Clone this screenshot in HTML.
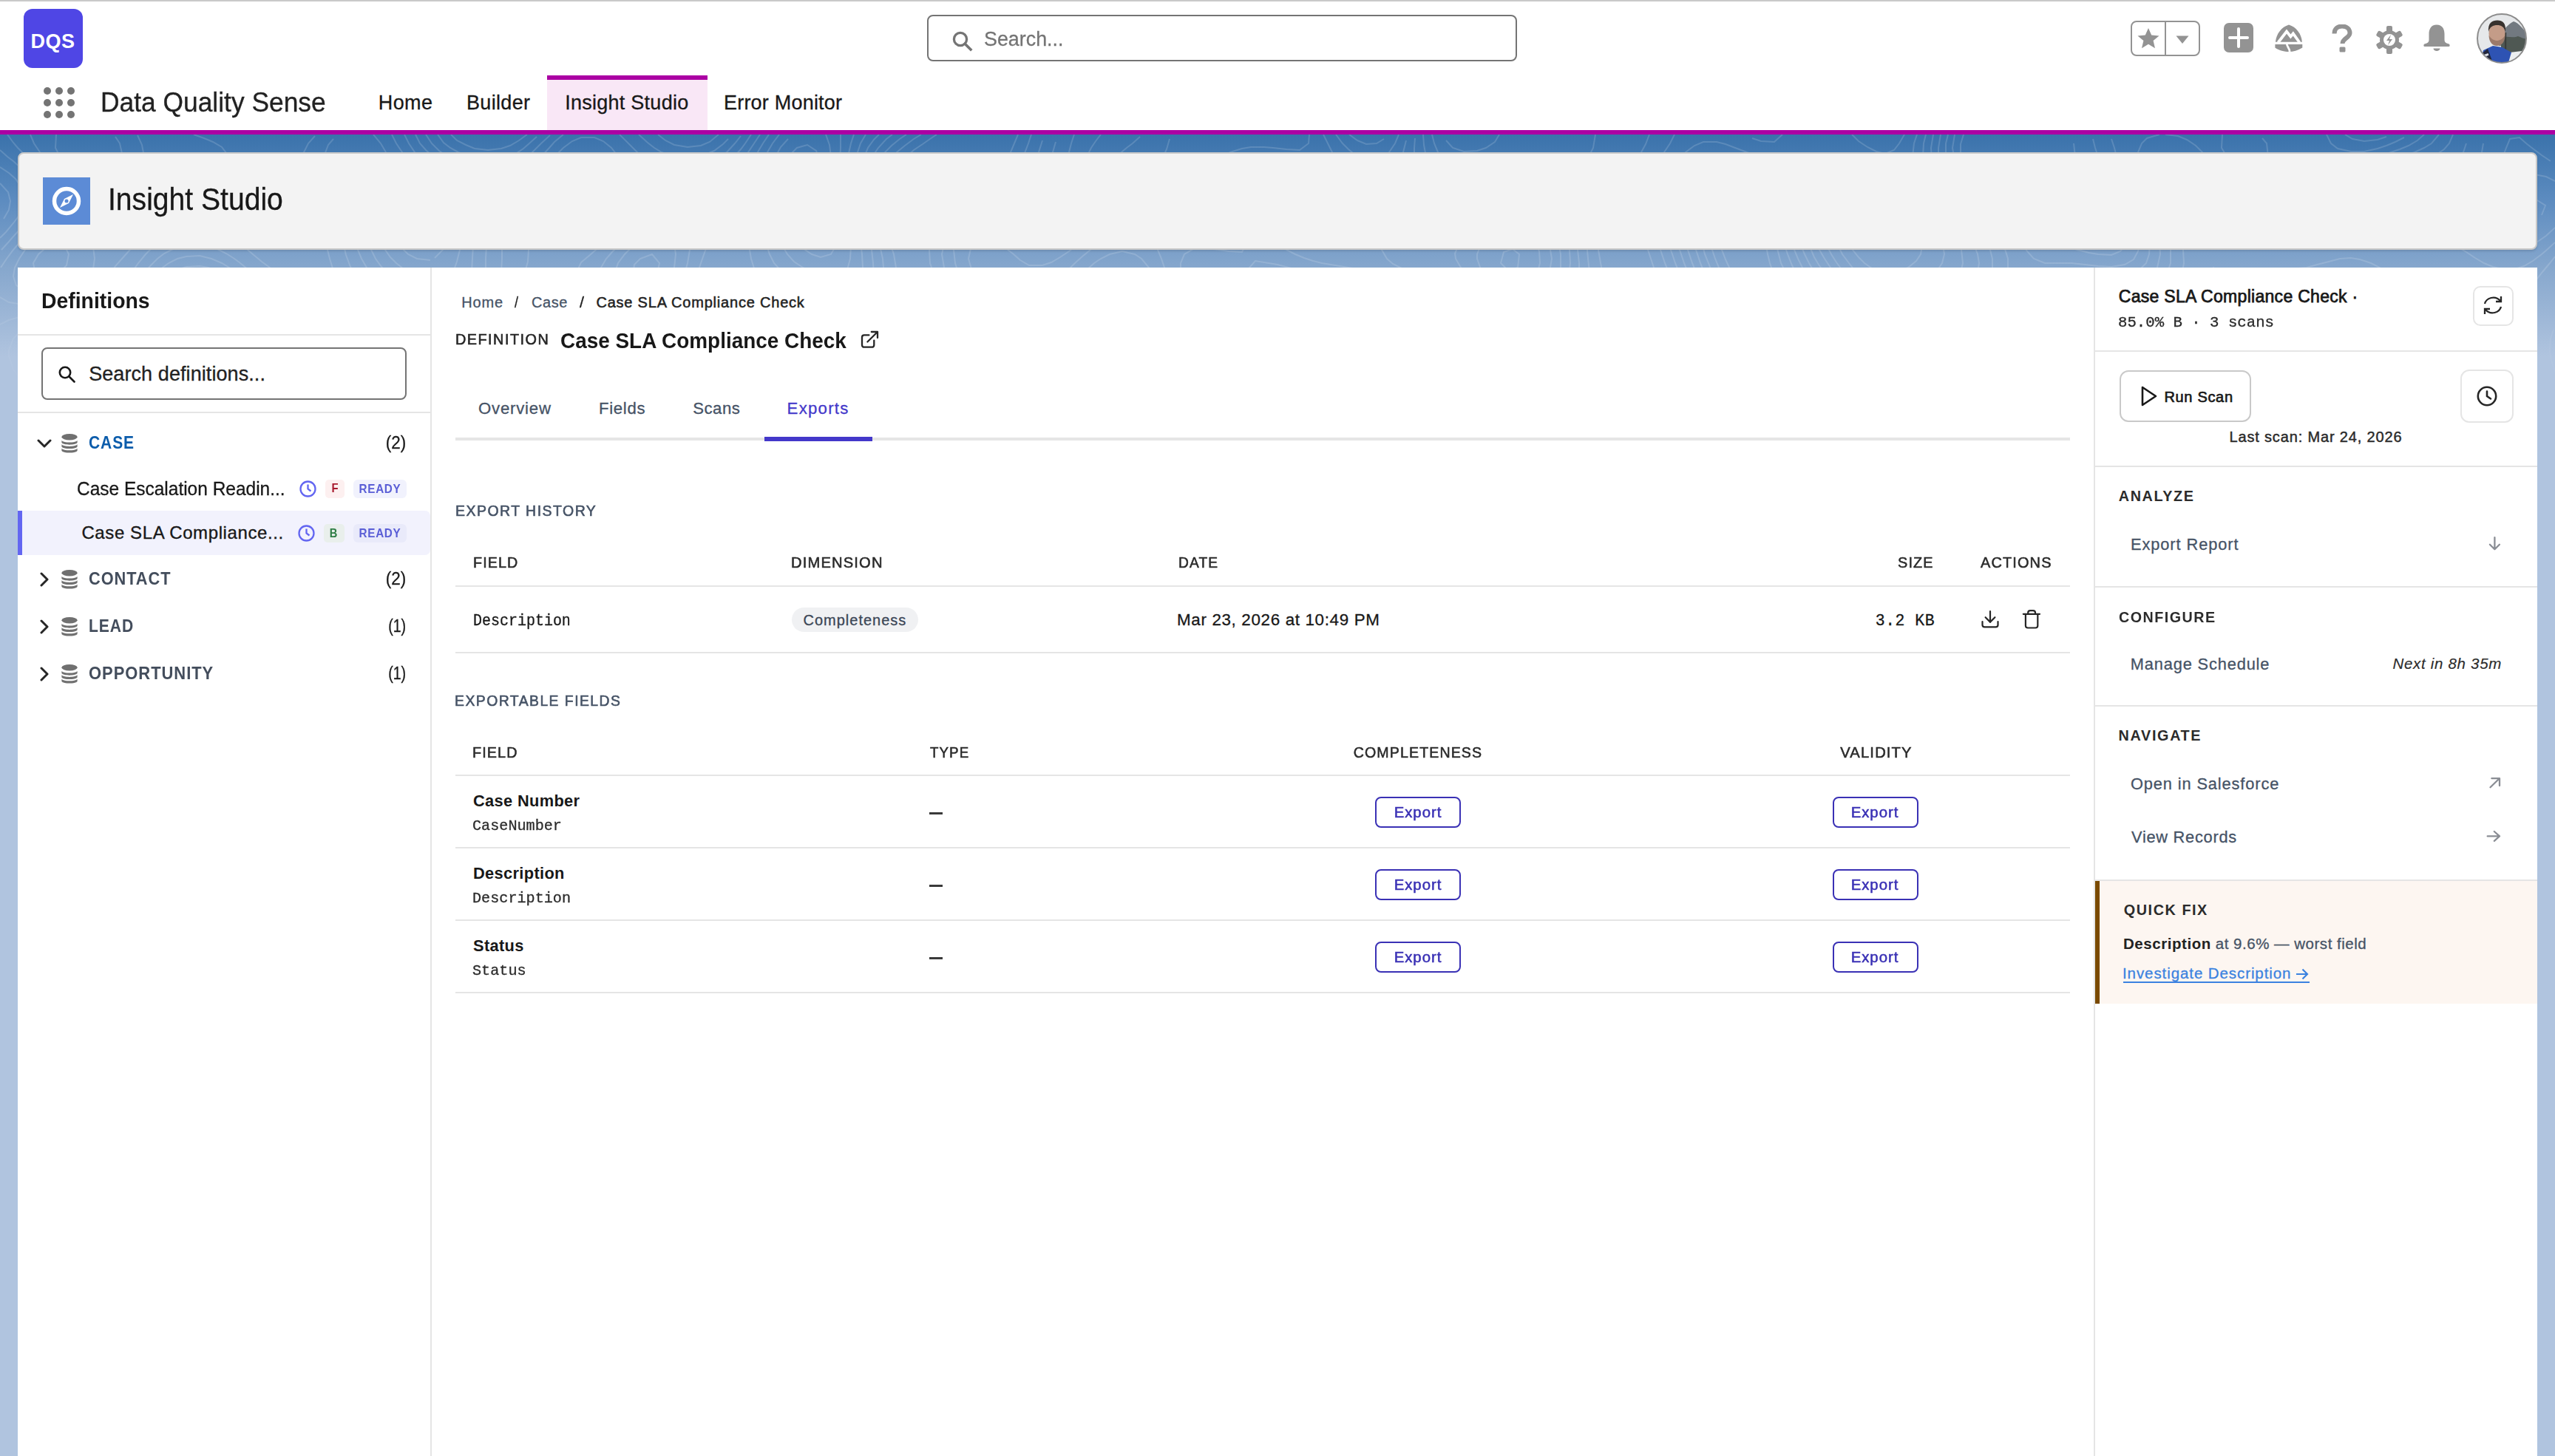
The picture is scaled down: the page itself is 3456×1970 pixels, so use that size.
<!DOCTYPE html>
<html><head><meta charset="utf-8"><style>
html,body{margin:0;padding:0;}
body{width:3456px;height:1970px;position:relative;overflow:hidden;background:#b0c4df;font-family:'Liberation Sans', sans-serif;}
.t{position:absolute;white-space:nowrap;}
.r{position:absolute;box-sizing:border-box;}
</style></head><body>
<div class="r" style="left:0px;top:182px;width:3456px;height:378px;background:linear-gradient(to bottom,#3a72ab 0px,#5d8cc0 90px,#86a7cd 180px,#b0c4df 300px);"></div>
<svg class="r" style="left:0px;top:182px;-webkit-mask-image:linear-gradient(to bottom,#000 0,#000 180px,rgba(0,0,0,.5) 260px,transparent 360px);" width="3456" height="420" viewBox="0 0 3456 420"><path d="M610 0 L618 8 L630 14 L642 19 L660 21 L678 19 L690 15 L702 8 L713 0 M1267 0 L1258 6 L1248 13 L1236 21 L1226 30 L1218 40 L1212 53 L1211 66 L1214 78 L1224 89 L1236 93 L1248 90 L1261 84 L1273 78 L1286 72 L1301 66 L1314 61 L1326 57 L1338 52 L1350 45 L1359 36 L1367 24 L1372 12 L1377 0 M2656 0 L2652 13 L2652 26 L2658 42 L2664 50 L2676 59 L2688 65 L2700 67 L2718 67 L2730 65 L2747 60 L2760 57 L2778 54 L2790 53 L2802 48 L2807 30 L2805 12 M2412 270 L2419 264 L2425 252 L2424 239 L2418 223 L2412 213 L2406 203 L2400 192 L2394 174 L2391 162 L2388 144 L2384 132 L2378 120 L2370 111 L2358 104 L2340 103 L2328 114 L2325 126 L2326 144 L2329 156 L2334 169 L2340 182 L2346 193 L2352 205 L2358 217 L2364 230 L2370 242 L2376 252 L2388 264 L2399 270 L2412 270 M313 330 L326 324 L336 317 L345 306 L346 288 L343 270 L340 258 L336 246 L330 234 L321 222 L312 212 L302 204 L292 198 L276 192 L264 191 L252 193 L240 199 L229 210 L224 222 L223 240 L228 258 L233 270 L239 282 L244 294 L251 306 L258 318 L264 324 L276 332 L294 335 L312 330 M720 420 L732 409 L740 402 L750 393 L759 384 L768 376 L780 366 L790 360 L804 355 L816 352 L834 349 L846 342 L850 330 L846 315 L838 306 L828 300 L810 297 L792 299 L780 303 L768 306 L750 310 L735 312 L720 314 L703 318 L690 321 L677 324 L660 328 L645 330 L630 332 L612 335 L600 341 L594 349 L592 366 L594 381 L597 396 L600 408 M3227 414 L3237 408 L3246 396 L3248 384 L3246 369 L3240 356 L3234 348 L3222 336 L3212 330 L3198 328 L3186 335 L3180 347 L3177 360 L3176 378 L3178 396 L3183 408 L3192 416 L3210 419 L3227 414 M1379 420 L1383 408 L1387 396 L1392 381 L1395 366 L1394 348 L1387 336 L1374 331 L1362 338 L1354 348 L1348 360 L1340 372 L1332 381 L1322 390 L1314 396 L1302 404 L1290 412 L1278 419 M949 420 L960 409 L961 396 L954 389 L940 384 L927 384 L912 389 L906 402 L912 414 M2800 420 L2793 408 L2784 400 L2772 395 L2754 391 L2742 389 L2724 387 L2706 387 L2693 390 L2680 396 L2670 404 L2662 414 M592 0 L600 11 L609 18 L620 24 L636 30 L648 33 L666 34 L684 32 L696 27 L708 19 L716 12 L726 3 M890 0 L900 8 L912 14 L930 17 L948 15 L960 10 L972 0 M1246 0 L1236 6 L1224 15 L1213 24 L1206 33 L1200 43 L1196 60 L1198 78 L1202 90 L1210 102 L1218 110 L1236 114 L1249 108 L1260 101 L1272 94 L1284 87 L1296 81 L1308 77 L1323 72 L1338 68 L1350 64 L1362 59 L1374 48 L1380 39 L1386 25 L1391 12 L1395 0 M2644 0 L2641 18 L2644 36 L2649 48 L2658 59 L2666 66 L2676 72 L2688 78 L2706 83 L2718 84 L2736 85 L2754 86 L2767 90 L2778 97 L2790 108 L2796 115 L2808 126 L2817 132 L2831 138 L2844 139 L2856 132 L2861 120 L2861 102 L2857 84 L2854 72 L2849 60 L2844 46 L2838 30 L2834 18 L2831 6 M3172 0 L3182 6 L3198 9 L3216 7 L3228 3 M2421 288 L2430 281 L2437 270 L2441 252 L2440 234 L2435 222 L2429 210 L2421 198 L2415 186 L2409 174 L2406 162 L2401 144 L2398 132 L2393 120 L2386 108 L2376 98 L2364 90 L2352 86 L2334 87 L2322 93 L2315 102 L2310 120 L2311 138 L2316 156 L2320 168 L2325 180 L2330 192 L2336 204 L2341 216 L2347 228 L2353 240 L2360 252 L2368 264 L2376 273 L2386 282 L2397 288 L2412 291 M2053 180 L2055 162 L2046 155 L2034 159 L2030 174 L2040 184 L2053 180 M425 360 L438 355 L449 348 L456 342 L466 330 L469 318 L465 306 L456 298 L444 292 L426 288 L414 288 L396 286 L381 282 L372 275 L363 264 L356 252 L349 240 L342 228 L336 220 L327 210 L318 201 L306 192 L296 186 L282 180 L270 178 L252 179 L240 183 L228 190 L220 198 L213 210 L210 222 L210 235 L214 252 L219 264 L224 276 L229 288 L235 300 L240 313 L246 326 L252 336 L264 348 L276 354 L288 356 L306 355 L318 353 L336 351 L354 352 L366 356 L380 360 L396 363 L414 363 M977 420 L984 408 L987 396 L984 380 L978 372 L966 366 L948 362 L934 360 L918 358 L905 354 L894 347 L885 336 L879 324 L873 312 L864 300 L857 294 L846 287 L834 282 L816 278 L798 277 L780 280 L768 283 L754 288 L738 293 L726 297 L714 301 L700 306 L684 311 L672 314 L654 317 L642 319 L624 319 L606 319 L588 320 L574 324 L567 336 L569 354 L573 366 L576 378 L581 396 L584 408 L589 420 M3245 420 L3252 414 L3260 402 L3262 384 L3258 366 L3253 354 L3246 343 L3240 335 L3229 324 L3222 317 L3210 309 L3198 303 L3180 302 L3169 312 L3165 324 L3163 342 L3162 354 L3161 372 L3161 390 L3162 402 L3168 420 M1397 420 L1402 408 L1406 396 L1410 382 L1413 366 L1412 348 L1408 336 L1402 324 L1392 313 L1380 308 L1362 310 L1352 318 L1344 329 L1338 341 L1332 353 L1326 363 L1320 372 L1308 384 L1301 390 L1290 398 L1278 406 L1266 413 L1255 420 M1848 372 L1848 358 L1836 351 L1829 360 L1835 372 L1848 372 M2827 420 L2822 408 L2815 396 L2808 387 L2797 378 L2785 372 L2772 369 L2754 368 L2736 367 L2718 367 L2700 368 L2688 372 L2676 380 L2665 390 L2658 399 L2652 409 M736 420 L744 413 L756 403 L765 396 L774 390 L786 383 L803 378 L816 377 L831 378 L846 383 L858 390 L865 396 L875 408 L882 417 M576 0 L584 12 L594 22 L606 30 L618 35 L630 39 L642 43 L660 46 L678 46 L696 42 L706 36 L714 30 L726 18 L732 12 L744 1 M864 0 L876 11 L885 18 L895 24 L912 30 L924 31 L942 31 L954 27 L966 22 L978 13 L985 6 M1226 0 L1217 6 L1206 15 L1197 24 L1190 36 L1186 48 L1184 66 L1187 84 L1191 96 L1197 108 L1205 120 L1212 128 L1224 138 L1236 139 L1246 132 L1254 125 L1265 114 L1273 108 L1284 100 L1296 93 L1308 89 L1325 84 L1338 82 L1356 80 L1373 78 L1386 72 L1392 65 L1398 50 L1402 36 L1405 24 L1410 8 M2635 0 L2632 12 L2632 30 L2635 42 L2642 54 L2652 66 L2658 72 L2670 81 L2682 88 L2694 94 L2706 98 L2718 103 L2732 108 L2743 114 L2754 122 L2766 132 L2773 138 L2784 145 L2796 151 L2810 156 L2826 160 L2838 162 L2856 163 L2868 158 L2875 150 L2880 133 L2880 120 L2879 108 L2877 90 L2874 74 L2871 60 L2868 48 L2863 30 L2860 18 L2856 6 M3006 0 L3005 18 L3012 30 L3018 36 L3030 43 L3048 44 L3060 38 L3068 30 L3066 12 L3060 5 M3147 0 L3153 12 L3162 19 L3180 23 L3198 23 L3216 19 L3228 15 L3240 10 L3252 4 M2422 306 L2433 300 L2442 290 L2448 278 L2453 264 L2454 252 L2454 240 L2449 222 L2443 210 L2436 198 L2430 188 L2424 177 L2418 162 L2414 150 L2411 138 L2406 122 L2400 109 L2394 99 L2385 90 L2376 83 L2364 77 L2346 72 L2334 72 L2322 75 L2310 83 L2304 91 L2298 108 L2298 120 L2299 132 L2303 150 L2306 162 L2311 174 L2316 187 L2322 201 L2328 214 L2334 227 L2340 239 L2346 250 L2352 260 L2358 270 L2368 282 L2376 289 L2388 298 L2400 304 L2412 307 M2057 216 L2065 210 L2074 198 L2080 186 L2083 174 L2082 158 L2076 144 L2070 137 L2058 130 L2040 128 L2022 132 L2013 138 L2004 147 L1998 162 L1998 168 L2004 185 L2010 195 L2018 204 L2028 213 L2040 219 L2057 216 M994 420 L1000 408 L1005 396 L1007 378 L1002 363 L993 354 L981 348 L966 344 L951 342 L936 339 L924 336 L912 329 L902 318 L894 308 L888 300 L876 289 L866 282 L854 276 L840 270 L828 266 L816 263 L798 261 L780 261 L766 264 L750 269 L738 274 L726 280 L714 286 L702 292 L690 297 L678 301 L660 306 L648 308 L630 308 L612 307 L600 305 L582 303 L564 301 L546 301 L528 302 L513 300 L499 294 L488 288 L477 282 L463 276 L450 271 L438 269 L420 266 L407 264 L390 258 L381 252 L372 243 L364 234 L355 222 L348 214 L339 204 L330 196 L318 186 L310 180 L300 174 L286 168 L270 164 L252 165 L240 168 L228 174 L216 183 L208 192 L201 204 L198 216 L198 233 L201 246 L206 258 L211 270 L217 282 L222 295 L228 311 L233 324 L238 336 L244 348 L252 358 L262 366 L276 371 L288 373 L306 373 L324 373 L342 374 L360 378 L372 380 L390 383 L408 382 L422 378 L438 372 L450 366 L461 360 L470 354 L480 347 L492 339 L504 332 L522 331 L534 339 L542 348 L551 360 L557 372 L562 384 L566 396 L570 409 M2851 420 L2846 408 L2839 396 L2832 386 L2826 378 L2814 366 L2805 360 L2795 354 L2779 348 L2766 345 L2751 342 L2736 339 L2724 335 L2712 327 L2710 312 L2713 300 L2714 282 L2706 276 L2694 279 L2682 288 L2676 300 L2676 309 L2680 324 L2677 342 L2671 354 L2664 366 L2658 376 L2652 387 L2646 398 L2640 411 M3265 420 L3273 408 L3276 390 L3272 372 L3268 360 L3261 348 L3253 336 L3246 326 L3239 318 L3228 306 L3222 300 L3210 290 L3199 282 L3188 276 L3174 273 L3157 276 L3150 282 L3144 300 L3144 308 L3145 324 L3147 342 L3147 360 L3147 378 L3146 396 L3145 414 M1415 420 L1419 408 L1422 396 L1426 378 L1427 360 L1424 342 L1420 330 L1414 318 L1405 306 L1398 299 L1386 292 L1368 289 L1354 294 L1344 301 L1335 312 L1329 324 L1324 336 L1319 348 L1312 360 L1303 372 L1296 379 L1284 389 L1274 396 L1265 402 L1254 409 L1242 416 M1849 402 L1861 396 L1867 384 L1869 366 L1866 353 L1860 341 L1848 331 L1836 327 L1824 330 L1812 341 L1809 354 L1812 370 L1818 382 L1824 390 L1836 399 L1848 402 M752 420 L762 412 L774 405 L786 399 L798 396 L816 396 L828 399 L840 405 L852 414 L858 420 M562 0 L568 12 L576 21 L586 30 L596 36 L609 42 L624 47 L636 51 L648 55 L666 59 L682 60 L690 60 L707 54 L715 48 L726 37 L732 30 L743 18 L750 10 L762 0 M838 0 L846 8 L856 18 L864 26 L876 34 L888 39 L900 42 L918 45 L936 45 L950 42 L966 36 L975 30 L984 23 L994 12 L1002 2 M1207 0 L1199 6 L1188 18 L1182 27 L1176 42 L1174 54 L1175 72 L1177 84 L1182 101 L1188 114 L1193 126 L1200 138 L1205 150 L1209 162 L1212 180 L1212 198 L1213 210 L1217 228 L1222 240 L1230 250 L1240 258 L1254 263 L1269 258 L1276 246 L1276 228 L1272 213 L1267 198 L1262 186 L1258 174 L1257 156 L1261 144 L1267 132 L1278 120 L1284 114 L1296 106 L1308 101 L1326 96 L1338 95 L1352 96 L1368 99 L1380 102 L1398 105 L1410 100 L1417 90 L1420 72 L1420 54 L1422 36 L1424 24 L1428 10 M2625 0 L2622 18 L2622 25 L2625 42 L2631 54 L2640 66 L2646 73 L2658 84 L2666 90 L2676 97 L2688 105 L2700 113 L2711 120 L2718 126 L2729 138 L2736 149 L2742 158 L2751 168 L2766 174 L2778 174 L2790 174 L2802 174 L2820 176 L2838 178 L2856 179 L2874 176 L2886 169 L2892 158 L2895 144 L2895 126 L2893 108 L2892 96 L2890 78 L2889 60 L2889 42 L2892 24 L2897 12 L2904 5 L2921 0 M2929 0 L2946 2 L2958 7 L2970 15 L2979 24 L2988 33 L2997 42 L3006 50 L3018 57 L3030 62 L3048 64 L3066 60 L3078 55 L3090 48 L3101 42 L3114 36 L3126 35 L3138 37 L3156 40 L3174 40 L3192 37 L3204 34 L3217 30 L3234 24 L3246 20 L3258 15 L3270 8 L3279 0 M2437 318 L2448 306 L2454 295 L2459 282 L2463 270 L2466 253 L2466 240 L2464 228 L2459 216 L2453 204 L2445 192 L2438 180 L2432 168 L2427 156 L2423 144 L2418 126 L2415 114 L2409 102 L2401 90 L2394 83 L2382 74 L2370 67 L2358 62 L2346 60 L2328 59 L2316 62 L2304 69 L2295 78 L2289 90 L2286 102 L2286 120 L2287 132 L2292 150 L2296 162 L2300 174 L2305 186 L2310 198 L2316 212 L2322 225 L2328 237 L2334 249 L2340 260 L2346 270 L2355 282 L2364 292 L2372 300 L2382 308 L2394 315 L2406 320 L2424 323 L2437 318 M2058 240 L2070 232 L2079 222 L2087 210 L2093 198 L2096 186 L2099 168 L2096 150 L2091 138 L2082 126 L2073 120 L2059 114 L2046 112 L2028 113 L2016 116 L2004 122 L1992 130 L1982 138 L1974 147 L1968 161 L1969 168 L1976 180 L1986 192 L1992 200 L2001 210 L2010 220 L2018 228 L2028 236 L2040 242 L2058 240 M1007 420 L1014 408 L1020 396 L1024 384 L1027 372 L1026 354 L1021 342 L1014 335 L1002 328 L987 324 L972 321 L954 318 L942 315 L930 309 L918 300 L911 294 L900 285 L888 278 L876 272 L864 267 L852 263 L839 258 L822 252 L810 249 L796 246 L780 244 L762 245 L750 248 L738 253 L726 260 L714 268 L703 276 L693 282 L682 288 L666 294 L654 297 L636 298 L618 297 L601 294 L588 291 L576 288 L558 283 L546 281 L528 277 L516 274 L504 270 L487 264 L474 259 L462 254 L450 250 L436 246 L420 242 L408 239 L396 234 L384 226 L372 216 L366 210 L354 199 L346 192 L336 183 L325 174 L317 168 L306 161 L294 155 L276 150 L264 149 L250 150 L234 155 L222 161 L213 168 L204 177 L196 186 L189 198 L186 210 L185 228 L188 240 L193 252 L198 264 L204 276 L210 289 L216 304 L221 318 L224 330 L228 342 L234 356 L240 366 L252 378 L263 384 L276 388 L293 390 L306 391 L324 392 L342 395 L354 398 L372 402 L384 403 L396 401 L414 396 L426 392 L438 386 L450 381 L462 375 L474 369 L486 364 L498 360 L516 359 L528 365 L537 372 L545 384 L551 396 L555 408 L560 420 M3094 420 L3081 414 L3069 408 L3056 402 L3042 397 L3030 395 L3012 394 L2994 395 L2982 396 L2964 398 L2946 399 L2928 402 L2916 405 L2901 408 L2892 408 L2878 402 L2868 396 L2856 386 L2848 378 L2838 368 L2829 360 L2820 352 L2808 343 L2796 336 L2786 330 L2776 324 L2766 316 L2758 306 L2753 294 L2749 276 L2747 264 L2743 246 L2736 234 L2724 230 L2712 234 L2700 241 L2688 249 L2676 257 L2666 264 L2658 270 L2646 282 L2640 294 L2639 306 L2641 318 L2646 336 L2647 348 L2646 364 L2642 378 L2638 390 L2633 402 L2628 416 M3283 420 L3288 407 L3288 390 L3286 378 L3281 366 L3276 354 L3269 342 L3260 330 L3252 319 L3246 311 L3237 300 L3228 290 L3221 282 L3210 270 L3203 264 L3192 256 L3180 251 L3162 249 L3144 252 L3132 257 L3124 264 L3118 276 L3118 294 L3121 306 L3126 322 L3130 336 L3132 353 L3132 366 L3131 378 L3127 396 L3122 408 L3114 419 M1433 420 L1436 408 L1440 391 L1441 378 L1440 360 L1438 348 L1434 335 L1428 321 L1422 310 L1415 300 L1404 288 L1397 282 L1386 276 L1368 272 L1350 275 L1338 281 L1329 288 L1320 300 L1315 312 L1311 324 L1308 336 L1302 350 L1296 360 L1286 372 L1278 380 L1266 389 L1256 396 L1246 402 L1236 408 L1224 415 M1857 420 L1867 414 L1875 402 L1879 390 L1881 372 L1878 354 L1874 342 L1867 330 L1860 322 L1848 315 L1830 314 L1816 318 L1806 325 L1799 336 L1796 354 L1800 372 L1805 384 L1812 394 L1818 402 L1830 413 L1842 419 M772 420 L786 414 L798 412 L816 414 L828 419 M76 0 L75 18 L81 30 L88 42 L96 52 L105 60 L114 66 L132 68 L144 63 L155 54 L162 44 L166 30 L162 12 L156 3 M547 0 L553 12 L561 24 L570 32 L582 40 L594 46 L606 51 L618 55 L632 60 L648 66 L660 70 L672 73 L690 77 L702 78 L714 76 L726 68 L732 60 L739 48 L746 36 L756 24 L762 18 L774 9 L786 4 L804 4 L816 9 L827 18 L834 27 L840 37 L846 50 L858 59 L876 59 L894 59 L912 60 L930 59 L948 57 L960 54 L972 48 L984 39 L993 30 L1002 20 L1008 12 L1016 0 M1189 0 L1182 7 L1174 18 L1169 30 L1165 48 L1165 66 L1167 84 L1170 96 L1176 113 L1181 126 L1186 138 L1190 150 L1194 168 L1195 180 L1196 198 L1198 216 L1200 228 L1206 244 L1212 255 L1219 264 L1230 275 L1240 282 L1252 288 L1266 293 L1278 298 L1286 306 L1290 321 L1290 330 L1285 348 L1279 360 L1272 368 L1261 378 L1254 384 L1242 392 L1230 400 L1218 407 L1206 414 L1197 420 M1455 420 L1459 408 L1461 390 L1459 372 L1456 360 L1451 348 L1446 335 L1440 322 L1434 311 L1427 300 L1419 288 L1410 277 L1403 270 L1392 262 L1380 256 L1362 254 L1344 255 L1326 257 L1313 252 L1303 240 L1298 228 L1292 216 L1287 204 L1282 192 L1277 180 L1274 162 L1278 144 L1284 132 L1290 125 L1302 116 L1314 111 L1332 108 L1350 111 L1362 115 L1374 120 L1388 126 L1404 130 L1422 127 L1432 120 L1440 108 L1443 96 L1444 78 L1443 60 L1443 42 L1446 24 L1449 12 L1453 0 M1825 0 L1836 8 L1848 13 L1862 12 L1872 6 M2615 0 L2612 18 L2613 36 L2617 48 L2624 60 L2633 72 L2640 80 L2650 90 L2658 97 L2670 107 L2679 114 L2688 122 L2698 132 L2706 143 L2712 155 L2716 168 L2716 186 L2712 199 L2705 210 L2694 222 L2687 228 L2676 237 L2664 245 L2653 252 L2644 258 L2634 266 L2625 276 L2620 288 L2619 306 L2622 320 L2627 336 L2630 348 L2631 366 L2628 384 L2625 396 L2621 408 M3301 420 L3303 402 L3300 385 L3296 372 L3290 360 L3283 348 L3276 337 L3270 328 L3263 318 L3253 306 L3246 296 L3240 288 L3231 276 L3222 264 L3216 257 L3205 246 L3198 240 L3186 234 L3168 230 L3150 230 L3132 234 L3120 238 L3108 244 L3100 252 L3095 264 L3094 282 L3096 295 L3101 312 L3106 324 L3110 336 L3113 354 L3111 372 L3104 384 L3090 389 L3072 386 L3060 383 L3042 379 L3030 377 L3012 376 L2994 376 L2976 377 L2958 377 L2940 377 L2924 378 L2910 379 L2892 379 L2880 377 L2868 372 L2856 365 L2844 355 L2835 348 L2826 341 L2814 332 L2804 324 L2796 318 L2784 307 L2778 299 L2772 288 L2767 270 L2765 258 L2764 240 L2766 222 L2771 210 L2778 202 L2790 195 L2802 192 L2820 191 L2838 192 L2850 192 L2868 192 L2880 190 L2892 185 L2903 174 L2907 162 L2908 144 L2907 126 L2905 108 L2904 90 L2905 72 L2908 54 L2915 42 L2922 36 L2940 31 L2958 34 L2970 40 L2981 48 L2989 54 L3000 62 L3012 70 L3024 75 L3036 78 L3054 79 L3066 77 L3082 72 L3096 67 L3108 64 L3126 61 L3144 60 L3156 59 L3174 56 L3186 52 L3198 48 L3215 42 L3228 37 L3240 33 L3252 29 L3266 24 L3279 18 L3289 12 L3299 0 M2434 342 L2446 336 L2454 325 L2460 313 L2465 300 L2469 288 L2473 276 L2477 258 L2478 246 L2477 234 L2472 216 L2466 205 L2460 195 L2454 186 L2447 174 L2441 162 L2436 150 L2431 132 L2428 120 L2424 107 L2418 94 L2412 84 L2400 72 L2391 66 L2381 60 L2368 54 L2352 49 L2340 46 L2322 46 L2310 49 L2298 55 L2286 65 L2280 74 L2274 89 L2272 102 L2274 120 L2276 132 L2280 147 L2285 162 L2289 174 L2294 186 L2299 198 L2305 210 L2310 222 L2316 234 L2322 246 L2328 258 L2335 270 L2342 282 L2351 294 L2358 301 L2369 312 L2377 318 L2388 325 L2400 333 L2412 338 L2424 342 M801 132 L812 126 L822 118 L831 108 L837 96 L835 78 L822 77 L810 81 L798 86 L786 92 L774 100 L768 109 L768 122 L777 132 L792 134 M2046 264 L2064 259 L2074 252 L2082 244 L2090 234 L2097 222 L2103 210 L2108 198 L2111 180 L2111 162 L2108 144 L2103 132 L2095 120 L2088 114 L2076 107 L2063 102 L2046 99 L2028 99 L2014 102 L1998 108 L1986 114 L1974 120 L1962 125 L1950 129 L1932 132 L1920 132 L1902 133 L1884 137 L1874 144 L1869 156 L1876 168 L1884 175 L1896 181 L1912 186 L1926 188 L1944 190 L1956 194 L1968 200 L1980 210 L1987 216 L1998 228 L2004 235 L2014 246 L2022 253 L2034 261 L2046 264 M1020 420 L1026 410 L1032 399 L1038 388 L1044 376 L1050 363 L1056 348 L1059 336 L1063 324 L1068 308 L1073 294 L1077 282 L1077 264 L1068 252 L1056 250 L1044 254 L1032 263 L1024 270 L1014 276 L996 276 L987 270 L982 258 L981 240 L978 224 L966 220 L960 228 L953 240 L944 252 L936 258 L918 264 L907 264 L894 263 L876 259 L864 256 L852 252 L836 246 L822 241 L810 236 L798 231 L786 227 L768 223 L756 222 L744 223 L730 228 L720 236 L711 246 L702 256 L694 264 L684 272 L672 280 L660 284 L642 288 L630 288 L618 287 L600 283 L588 280 L576 276 L560 270 L546 265 L534 261 L522 257 L507 252 L492 246 L480 241 L468 234 L457 228 L446 222 L436 216 L426 210 L413 204 L398 198 L385 192 L374 186 L365 180 L354 172 L342 162 L335 156 L324 147 L312 139 L300 134 L288 131 L270 129 L252 130 L240 133 L228 138 L216 145 L204 155 L197 162 L187 174 L180 184 L174 195 L171 210 L173 228 L177 240 L182 252 L188 264 L195 276 L200 288 L205 300 L210 314 L214 330 L217 342 L222 358 L228 372 L234 382 L242 390 L252 397 L264 402 L282 407 L294 409 L312 412 L324 415 L336 420 M67 192 L81 186 L90 177 L93 162 L87 150 L72 149 L60 155 L52 162 L45 174 L48 189 L60 193 M1881 420 L1886 408 L1890 390 L1890 378 L1890 366 L1887 348 L1883 336 L1877 324 L1867 312 L1858 306 L1842 301 L1824 302 L1812 307 L1800 314 L1791 324 L1786 336 L1785 354 L1788 369 L1794 384 L1800 396 L1806 405 L1813 414 M403 420 L414 414 L426 407 L438 401 L450 395 L462 389 L475 384 L492 379 L510 379 L522 384 L533 396 L540 408 L545 420 M145 420 L132 414 L120 412 L102 412 L90 415 M41 0 L46 12 L54 24 L60 32 L67 42 L75 54 L82 66 L87 78 L90 90 L89 102 L80 114 L72 121 L60 131 L52 138 L42 148 L34 156 L26 168 L20 180 L18 192 L22 204 L31 210 L48 213 L66 212 L78 210 L95 204 L108 198 L118 192 L126 182 L128 168 L126 152 L124 138 L124 120 L130 108 L138 102 L150 95 L162 88 L174 80 L182 72 L189 60 L193 48 L195 30 L192 14 L186 1 M262 0 L276 5 L288 10 L300 17 L306 25 L308 42 L305 54 L300 66 L291 78 L282 86 L270 92 L258 96 L240 101 L228 106 L216 113 L208 120 L198 130 L191 138 L181 150 L174 158 L165 168 L156 178 L150 188 L149 204 L153 216 L158 228 L164 240 L171 252 L178 264 L185 276 L191 288 L196 300 L200 312 L204 327 L207 342 L210 360 L212 372 L216 388 L222 400 L229 408 L240 416 M530 0 L536 12 L544 24 L552 33 L564 41 L576 48 L588 53 L600 58 L612 62 L624 67 L637 72 L650 78 L662 84 L673 90 L684 97 L696 107 L702 114 L709 126 L714 144 L715 156 L714 172 L710 186 L706 198 L702 211 L696 228 L691 240 L684 252 L678 259 L666 269 L654 274 L642 277 L624 277 L612 275 L594 270 L582 266 L570 261 L558 256 L546 251 L534 246 L520 240 L507 234 L496 228 L486 222 L474 213 L465 204 L456 192 L450 181 L446 168 L443 156 L442 138 L442 120 L439 102 L435 90 L428 78 L421 66 L414 54 L410 42 L411 24 L417 12 L426 2 M1032 420 L1040 408 L1049 396 L1056 386 L1062 378 L1072 366 L1080 355 L1086 346 L1092 334 L1098 318 L1102 306 L1105 294 L1108 276 L1107 258 L1104 245 L1097 234 L1086 225 L1074 218 L1062 214 L1050 210 L1037 204 L1026 194 L1020 181 L1016 168 L1014 156 L1008 138 L1002 129 L990 121 L972 126 L966 132 L959 144 L954 157 L948 174 L944 186 L940 198 L935 210 L929 222 L920 234 L912 240 L899 246 L882 247 L870 246 L852 241 L840 236 L828 231 L816 224 L804 216 L796 210 L786 200 L780 186 L786 173 L798 163 L806 156 L816 149 L828 139 L836 132 L846 122 L854 114 L864 102 L870 96 L882 86 L894 81 L908 78 L924 77 L942 77 L960 75 L972 70 L984 60 L990 53 L999 42 L1008 30 L1014 21 L1020 12 L1028 0 M1171 0 L1164 12 L1160 24 L1157 36 L1155 54 L1156 72 L1158 85 L1162 102 L1166 114 L1170 126 L1176 144 L1179 156 L1181 174 L1182 192 L1182 207 L1183 222 L1188 240 L1193 252 L1200 264 L1206 272 L1214 282 L1224 291 L1235 300 L1243 306 L1254 315 L1262 324 L1266 342 L1260 358 L1254 366 L1242 377 L1233 384 L1224 390 L1212 397 L1200 404 L1188 411 L1177 420 M1495 420 L1506 410 L1513 402 L1515 384 L1506 377 L1494 372 L1482 363 L1474 354 L1465 342 L1458 331 L1452 321 L1446 311 L1439 300 L1432 288 L1424 276 L1416 266 L1410 258 L1398 247 L1388 240 L1374 235 L1362 233 L1344 232 L1329 228 L1320 222 L1309 210 L1302 199 L1296 187 L1292 174 L1290 156 L1296 141 L1304 132 L1314 126 L1332 123 L1349 126 L1362 132 L1372 138 L1383 144 L1397 150 L1410 152 L1422 150 L1434 144 L1446 135 L1454 126 L1461 114 L1465 102 L1467 84 L1466 66 L1466 48 L1470 30 L1476 18 L1482 9 L1489 0 M1807 0 L1816 12 L1824 20 L1836 30 L1848 36 L1860 37 L1872 32 L1879 24 L1887 12 L1892 0 M2605 0 L2602 12 L2601 30 L2604 44 L2610 57 L2616 66 L2626 78 L2634 87 L2642 96 L2652 105 L2661 114 L2670 123 L2678 132 L2686 144 L2692 156 L2695 168 L2695 186 L2690 198 L2682 210 L2676 217 L2664 227 L2654 234 L2644 240 L2634 246 L2622 254 L2611 264 L2604 275 L2601 288 L2602 306 L2605 318 L2610 332 L2615 348 L2618 360 L2618 378 L2616 390 L2611 408 L2607 420 M3319 420 L3318 402 L3315 390 L3311 378 L3306 366 L3299 354 L3292 342 L3283 330 L3276 321 L3269 312 L3261 300 L3252 288 L3246 279 L3240 270 L3233 258 L3225 246 L3216 235 L3209 228 L3198 220 L3186 215 L3168 212 L3150 213 L3132 216 L3120 218 L3106 222 L3093 228 L3084 236 L3078 247 L3075 264 L3075 282 L3078 300 L3080 312 L3083 330 L3082 348 L3072 357 L3054 359 L3036 360 L3024 361 L3006 362 L2988 363 L2970 363 L2952 363 L2934 364 L2916 365 L2898 364 L2880 361 L2868 356 L2856 349 L2846 342 L2838 336 L2826 327 L2815 318 L2808 312 L2797 300 L2790 291 L2784 278 L2780 264 L2780 246 L2784 228 L2790 218 L2801 210 L2814 205 L2826 204 L2844 204 L2856 204 L2872 204 L2886 202 L2899 198 L2910 191 L2918 180 L2922 162 L2921 144 L2919 126 L2918 108 L2918 90 L2922 72 L2928 62 L2940 54 L2952 53 L2964 56 L2976 62 L2988 70 L3000 77 L3012 84 L3024 89 L3036 92 L3054 93 L3072 90 L3084 87 L3097 84 L3114 81 L3132 79 L3149 78 L3162 76 L3174 72 L3189 66 L3202 60 L3215 54 L3228 49 L3240 45 L3252 41 L3269 36 L3282 32 L3294 28 L3306 20 L3313 12 L3318 0 M786 51 L775 42 L786 33 L796 42 L786 51 M2448 366 L2456 360 L2463 348 L2468 336 L2472 321 L2476 306 L2480 294 L2484 279 L2488 264 L2490 252 L2490 234 L2487 222 L2482 210 L2475 198 L2467 186 L2460 176 L2454 166 L2448 152 L2443 138 L2441 126 L2437 108 L2434 96 L2429 84 L2420 72 L2412 64 L2400 56 L2388 50 L2376 44 L2364 39 L2352 35 L2334 31 L2316 31 L2298 36 L2288 42 L2280 49 L2270 60 L2264 72 L2260 84 L2259 102 L2262 120 L2264 132 L2268 144 L2274 162 L2278 174 L2283 186 L2288 198 L2294 210 L2300 222 L2305 234 L2311 246 L2317 258 L2323 270 L2330 282 L2338 294 L2346 305 L2352 312 L2364 323 L2373 330 L2382 336 L2394 345 L2406 353 L2418 360 L2430 366 L2442 367 M2064 282 L2076 274 L2086 264 L2094 254 L2100 246 L2108 234 L2114 222 L2118 210 L2122 192 L2124 174 L2123 156 L2119 138 L2114 126 L2106 114 L2100 108 L2088 100 L2076 94 L2064 90 L2046 87 L2028 87 L2010 90 L1998 93 L1986 97 L1974 102 L1956 107 L1944 109 L1926 109 L1914 108 L1896 105 L1878 104 L1860 106 L1848 109 L1830 111 L1812 108 L1800 104 L1788 98 L1776 90 L1767 84 L1758 78 L1746 70 L1734 64 L1716 63 L1704 72 L1702 84 L1704 98 L1709 114 L1714 126 L1721 138 L1728 146 L1740 156 L1752 162 L1764 167 L1776 171 L1788 174 L1806 177 L1824 180 L1836 182 L1848 186 L1862 192 L1875 198 L1890 204 L1902 207 L1920 209 L1938 210 L1950 212 L1962 217 L1974 224 L1985 234 L1992 242 L2001 252 L2010 263 L2017 270 L2028 279 L2040 285 L2058 285 M1894 420 L1897 408 L1899 390 L1899 372 L1897 354 L1895 342 L1890 327 L1884 315 L1878 306 L1866 295 L1854 290 L1836 289 L1818 292 L1806 297 L1794 304 L1785 312 L1777 324 L1774 336 L1774 354 L1777 366 L1782 382 L1788 395 L1794 406 L1800 416 M180 420 L168 412 L156 406 L144 402 L126 397 L114 396 L96 396 L84 396 L66 400 L54 403 L42 413 M435 420 L444 414 L456 407 L468 402 L486 397 L504 398 L516 405 L524 414 M10 0 L18 11 L24 18 L36 30 L42 37 L52 48 L59 60 L65 72 L67 84 L65 96 L60 108 L51 120 L42 129 L34 138 L24 149 L18 156 L9 168 L1 180 M505 0 L515 12 L522 24 L528 32 L540 42 L551 48 L564 54 L576 58 L588 63 L600 67 L613 72 L626 78 L638 84 L648 91 L660 101 L667 108 L674 120 L678 134 L679 150 L679 168 L678 186 L678 199 L677 216 L674 234 L668 246 L660 255 L648 262 L636 265 L618 265 L606 263 L592 258 L579 252 L566 246 L554 240 L542 234 L530 228 L519 222 L509 216 L498 208 L487 198 L480 189 L474 179 L468 163 L465 150 L463 132 L463 114 L462 96 L460 84 L456 72 L449 60 L442 48 L438 30 L444 14 L451 6 M1045 420 L1054 408 L1062 400 L1072 390 L1080 383 L1092 374 L1101 366 L1110 354 L1115 342 L1119 330 L1122 318 L1126 300 L1129 288 L1132 270 L1133 252 L1128 236 L1122 227 L1111 216 L1102 210 L1092 204 L1080 198 L1068 192 L1056 184 L1047 174 L1041 162 L1037 150 L1032 133 L1027 120 L1021 108 L1014 97 L1008 86 L1005 72 L1008 58 L1014 44 L1020 33 L1026 22 L1032 12 L1040 0 M1155 0 L1151 12 L1147 30 L1146 48 L1146 60 L1147 72 L1149 90 L1152 102 L1157 120 L1160 132 L1164 147 L1166 162 L1167 180 L1165 198 L1164 215 L1164 225 L1166 240 L1172 252 L1179 264 L1188 276 L1194 283 L1203 294 L1212 303 L1221 312 L1230 322 L1236 330 L1240 348 L1236 360 L1225 372 L1217 378 L1206 385 L1194 391 L1182 397 L1170 405 L1161 414 M1549 420 L1555 408 L1559 390 L1558 372 L1553 360 L1542 350 L1530 346 L1512 345 L1497 342 L1483 336 L1476 330 L1465 318 L1458 309 L1452 300 L1444 288 L1437 276 L1429 264 L1422 252 L1416 242 L1410 232 L1402 222 L1392 212 L1380 207 L1362 206 L1344 205 L1332 201 L1321 192 L1314 182 L1310 168 L1314 150 L1321 144 L1338 142 L1350 147 L1362 155 L1371 162 L1380 170 L1392 177 L1410 177 L1422 173 L1434 166 L1446 158 L1456 150 L1464 143 L1474 132 L1482 123 L1488 114 L1494 99 L1496 84 L1496 66 L1498 48 L1505 36 L1512 28 L1524 18 L1532 12 L1542 3 M1790 0 L1796 12 L1802 24 L1809 36 L1814 48 L1812 65 L1800 67 L1788 64 L1776 58 L1764 52 L1752 47 L1740 42 L1722 37 L1704 37 L1687 42 L1680 48 L1674 65 L1674 72 L1677 90 L1680 103 L1684 120 L1686 138 L1686 147 L1680 159 L1662 158 L1650 156 L1632 154 L1614 155 L1602 162 L1597 174 L1597 192 L1602 210 L1606 222 L1612 234 L1618 246 L1626 256 L1635 264 L1650 269 L1667 264 L1674 254 L1679 240 L1681 228 L1685 210 L1687 198 L1690 180 L1698 171 L1716 174 L1728 176 L1743 180 L1758 184 L1770 187 L1787 192 L1800 195 L1812 198 L1830 202 L1842 206 L1854 211 L1866 217 L1878 223 L1896 228 L1908 229 L1926 228 L1944 229 L1959 234 L1969 240 L1980 250 L1987 258 L1997 270 L2004 279 L2012 288 L2022 297 L2034 306 L2046 311 L2064 309 L2076 300 L2082 294 L2093 282 L2100 273 L2107 264 L2115 252 L2123 240 L2128 228 L2132 216 L2135 198 L2136 186 L2136 174 L2134 156 L2131 138 L2127 126 L2121 114 L2112 102 L2105 96 L2094 89 L2082 84 L2064 78 L2052 76 L2034 75 L2016 76 L2004 79 L1986 83 L1974 86 L1956 90 L1944 90 L1932 89 L1915 84 L1905 78 L1896 68 L1892 54 L1895 36 L1898 24 L1902 8 M2593 0 L2589 12 L2587 30 L2590 48 L2597 60 L2604 69 L2612 78 L2622 89 L2628 96 L2639 108 L2646 116 L2655 126 L2664 138 L2670 149 L2675 162 L2677 174 L2675 186 L2670 198 L2660 210 L2652 217 L2640 224 L2628 231 L2616 237 L2604 244 L2595 252 L2586 264 L2582 276 L2582 294 L2586 310 L2591 324 L2596 336 L2600 348 L2604 362 L2605 378 L2604 390 L2599 408 L2595 420 M3338 420 L3336 407 L3332 390 L3328 378 L3322 366 L3315 354 L3306 342 L3300 334 L3292 324 L3282 312 L3276 304 L3268 294 L3260 282 L3253 270 L3247 258 L3241 246 L3235 234 L3228 223 L3222 215 L3210 205 L3198 198 L3186 195 L3168 193 L3150 195 L3132 198 L3120 200 L3102 203 L3090 206 L3078 211 L3067 222 L3062 234 L3060 246 L3059 264 L3060 282 L3060 294 L3060 306 L3056 324 L3048 335 L3036 341 L3024 345 L3009 348 L2994 350 L2976 351 L2958 352 L2940 353 L2922 353 L2904 353 L2886 350 L2874 346 L2862 340 L2850 332 L2839 324 L2832 318 L2820 308 L2813 300 L2803 288 L2798 276 L2794 264 L2795 246 L2799 234 L2808 224 L2820 218 L2832 216 L2850 215 L2868 215 L2886 214 L2904 210 L2916 204 L2924 198 L2932 186 L2936 174 L2936 156 L2934 142 L2932 126 L2931 108 L2934 91 L2940 80 L2952 74 L2970 77 L2982 82 L2994 89 L3006 96 L3018 102 L3030 106 L3042 108 L3057 108 L3072 106 L3088 102 L3102 99 L3120 98 L3138 97 L3155 96 L3168 93 L3180 88 L3192 81 L3204 74 L3216 67 L3228 61 L3240 57 L3252 53 L3270 49 L3282 47 L3300 44 L3312 40 L3324 33 L3332 24 L3336 12 M2462 396 L2472 384 L2477 372 L2480 360 L2484 342 L2486 330 L2489 312 L2492 300 L2496 285 L2501 270 L2504 258 L2506 240 L2502 224 L2496 211 L2490 201 L2484 192 L2476 180 L2468 168 L2461 156 L2457 144 L2454 132 L2451 114 L2451 96 L2451 78 L2448 65 L2436 54 L2424 48 L2412 43 L2400 38 L2388 33 L2376 29 L2363 24 L2347 18 L2334 13 L2322 10 L2304 10 L2292 15 L2280 24 L2274 30 L2263 42 L2256 51 L2250 61 L2245 78 L2244 90 L2245 102 L2249 120 L2252 132 L2256 145 L2262 162 L2266 174 L2271 186 L2277 198 L2282 210 L2288 222 L2294 234 L2300 246 L2306 258 L2312 270 L2317 282 L2323 294 L2330 306 L2338 318 L2346 327 L2357 336 L2365 342 L2376 350 L2388 359 L2397 366 L2406 374 L2418 384 L2426 390 L2436 397 L2454 400 M882 234 L870 234 L852 229 L840 224 L828 216 L821 210 L813 198 L813 180 L820 168 L828 159 L837 150 L846 142 L857 132 L865 126 L876 117 L888 109 L900 104 L918 103 L930 110 L935 126 L935 144 L932 162 L930 174 L925 192 L920 204 L913 216 L906 224 L894 231 L882 234 M0 220 L12 227 L24 229 L42 229 L57 228 L72 226 L90 222 L102 220 L120 220 L132 225 L143 234 L150 242 L158 252 L166 264 L174 275 L180 286 L186 298 L191 312 L194 324 L196 342 L196 360 L192 378 L186 387 L174 390 L162 390 L144 387 L126 384 L114 383 L96 382 L78 381 L60 381 L42 380 L24 380 L10 384 L4 396 L5 414 M1905 420 L1907 402 L1908 384 L1907 366 L1905 348 L1902 331 L1898 318 L1894 306 L1887 294 L1878 283 L1866 276 L1854 274 L1836 274 L1824 277 L1810 282 L1798 288 L1788 294 L1776 303 L1768 312 L1763 324 L1761 342 L1764 360 L1768 372 L1772 384 L1777 396 L1782 408 M1137 0 L1137 18 L1136 36 L1136 54 L1137 72 L1139 90 L1141 102 L1146 120 L1148 132 L1151 150 L1150 168 L1146 183 L1139 192 L1122 194 L1110 191 L1098 186 L1086 180 L1074 172 L1065 162 L1058 150 L1053 138 L1049 126 L1044 113 L1038 100 L1032 87 L1027 72 L1026 60 L1028 48 L1032 36 L1038 24 L1045 12 L1054 0 M1771 0 L1770 12 L1758 21 L1740 20 L1722 18 L1710 17 L1692 17 L1680 19 L1664 24 L1654 30 L1644 42 L1642 54 L1644 67 L1648 84 L1650 97 L1649 108 L1638 120 L1626 121 L1613 120 L1596 115 L1584 108 L1578 101 L1572 90 L1566 74 L1564 60 L1566 47 L1572 33 L1578 20 L1582 6 M1915 420 L1916 402 L1917 384 L1916 366 L1915 348 L1913 336 L1911 318 L1908 302 L1905 288 L1904 270 L1912 258 L1925 252 L1938 250 L1951 252 L1963 258 L1974 267 L1982 276 L1992 288 L1998 296 L2007 306 L2016 315 L2025 324 L2034 331 L2046 338 L2058 342 L2070 341 L2082 331 L2088 323 L2095 312 L2104 300 L2112 288 L2118 280 L2126 270 L2135 258 L2142 246 L2147 234 L2149 222 L2151 204 L2150 186 L2148 168 L2147 156 L2144 138 L2141 126 L2136 113 L2130 102 L2119 90 L2111 84 L2100 78 L2086 72 L2070 67 L2058 65 L2040 63 L2022 63 L2004 66 L1992 68 L1974 71 L1962 73 L1947 72 L1932 67 L1923 60 L1916 48 L1913 36 L1913 18 L1914 5 M2265 0 L2259 12 L2251 24 L2244 34 L2238 43 L2232 54 L2227 72 L2227 90 L2231 108 L2234 120 L2238 132 L2244 150 L2248 162 L2252 174 L2257 186 L2263 198 L2269 210 L2275 222 L2281 234 L2287 246 L2293 258 L2298 270 L2304 285 L2308 300 L2311 312 L2312 330 L2304 342 L2292 348 L2281 354 L2274 360 L2268 372 L2267 390 L2268 402 L2268 414 M2411 0 L2400 10 L2382 9 L2370 5 M2576 0 L2569 12 L2562 21 L2550 26 L2538 23 L2526 17 L2514 9 L2505 0 M3359 420 L3356 402 L3354 388 L3351 372 L3347 360 L3339 348 L3330 341 L3318 331 L3311 324 L3300 314 L3292 306 L3282 294 L3276 285 L3270 275 L3264 264 L3258 249 L3253 234 L3250 222 L3245 210 L3239 198 L3228 186 L3219 180 L3207 174 L3192 169 L3180 167 L3165 168 L3150 172 L3138 175 L3120 180 L3108 181 L3090 183 L3072 186 L3060 190 L3051 198 L3045 210 L3043 228 L3044 246 L3046 264 L3046 282 L3044 300 L3040 312 L3030 324 L3021 330 L3006 336 L2994 338 L2976 341 L2958 342 L2946 342 L2928 343 L2910 343 L2898 341 L2880 337 L2868 331 L2856 324 L2848 318 L2838 310 L2828 300 L2820 290 L2814 281 L2809 264 L2811 246 L2820 235 L2832 229 L2844 227 L2862 226 L2880 225 L2898 224 L2910 221 L2923 216 L2934 209 L2945 198 L2952 186 L2954 174 L2953 156 L2951 144 L2948 126 L2951 108 L2958 99 L2976 99 L2988 105 L3000 111 L3012 118 L3024 124 L3036 128 L3054 129 L3069 126 L3084 122 L3096 120 L3114 118 L3132 119 L3144 120 L3162 121 L3174 118 L3186 110 L3196 102 L3204 95 L3216 85 L3227 78 L3239 72 L3252 68 L3264 65 L3282 63 L3300 62 L3318 61 L3330 57 L3342 50 L3349 42 L3356 30 L3359 12 M0 21 L10 30 L18 36 L30 47 L37 54 L45 66 L49 78 L48 96 L43 108 L36 117 L29 126 L18 138 L12 145 L2 156 M642 247 L624 252 L606 249 L594 245 L582 239 L570 233 L558 227 L546 220 L534 213 L522 205 L512 198 L504 190 L496 180 L489 168 L484 156 L481 138 L481 120 L483 102 L486 85 L489 72 L493 60 L504 53 L516 54 L534 58 L546 61 L564 65 L576 69 L588 72 L603 78 L616 84 L626 90 L636 97 L646 108 L653 120 L657 132 L658 150 L657 168 L657 186 L658 204 L657 222 L653 234 L643 246 M2501 420 L2497 402 L2498 384 L2500 366 L2502 348 L2503 336 L2505 318 L2508 305 L2514 289 L2520 278 L2526 267 L2531 252 L2527 234 L2520 222 L2514 213 L2508 204 L2499 192 L2490 181 L2484 173 L2477 162 L2471 150 L2467 132 L2467 114 L2472 99 L2479 90 L2490 83 L2502 77 L2516 72 L2530 66 L2543 60 L2556 56 L2569 60 L2580 66 L2592 76 L2601 84 L2610 93 L2618 102 L2628 114 L2634 122 L2641 132 L2648 144 L2653 156 L2655 174 L2652 187 L2644 198 L2634 206 L2622 213 L2610 219 L2598 225 L2586 231 L2574 238 L2564 246 L2556 256 L2554 270 L2556 282 L2562 300 L2566 312 L2572 324 L2578 336 L2583 348 L2588 360 L2590 378 L2588 396 L2585 408 L2580 420 M1583 420 L1583 402 L1582 384 L1580 366 L1578 349 L1573 336 L1566 328 L1550 324 L1536 324 L1524 324 L1510 324 L1494 321 L1482 315 L1472 306 L1464 297 L1457 288 L1450 276 L1443 264 L1438 252 L1433 240 L1428 222 L1430 204 L1436 192 L1446 182 L1454 174 L1464 165 L1475 156 L1483 150 L1494 142 L1506 136 L1518 131 L1536 130 L1548 133 L1560 144 L1566 156 L1571 168 L1575 180 L1579 192 L1584 208 L1589 222 L1593 234 L1597 246 L1602 264 L1607 276 L1614 287 L1624 294 L1638 298 L1650 300 L1668 301 L1680 298 L1692 291 L1698 281 L1701 264 L1702 246 L1704 233 L1710 216 L1716 208 L1728 201 L1746 200 L1764 203 L1776 206 L1791 210 L1806 215 L1818 221 L1830 228 L1837 234 L1836 249 L1824 258 L1813 264 L1802 270 L1792 276 L1782 282 L1770 290 L1758 299 L1751 306 L1745 318 L1745 336 L1748 348 L1752 362 L1757 378 L1761 390 L1765 402 L1770 420 M888 218 L870 221 L853 216 L844 210 L834 198 L832 186 L836 174 L845 162 L852 155 L864 146 L876 138 L888 134 L906 138 L912 148 L914 162 L912 180 L909 192 L903 204 L894 214 M3456 165 L3449 174 L3439 186 L3432 195 L3425 204 L3414 214 L3402 221 L3390 227 L3382 234 L3374 246 L3369 258 L3366 270 L3362 288 L3360 306 L3360 318 L3361 330 L3366 342 L3378 352 L3390 359 L3402 365 L3413 372 L3420 378 L3429 390 L3434 402 L3439 414 M0 257 L12 251 L30 246 L42 244 L60 241 L72 239 L90 237 L108 236 L123 240 L134 246 L144 254 L153 264 L162 275 L168 284 L174 295 L180 310 L183 324 L184 342 L180 358 L174 366 L162 372 L144 373 L128 372 L114 371 L96 369 L78 367 L66 366 L48 362 L36 358 L24 353 L12 346 L2 336 M3456 321 L3451 306 L3449 294 L3450 276 L3454 264 M1182 374 L1164 378 L1146 372 L1144 360 L1144 342 L1146 330 L1151 312 L1158 301 L1170 298 L1182 305 L1191 312 L1200 321 L1207 330 L1211 348 L1205 360 L1194 368 L1182 374 M2349 420 L2340 412 L2333 402 L2330 384 L2333 366 L2346 361 L2362 366 L2373 372 L2382 379 L2393 390 L2400 400 L2406 409 M1059 420 L1068 412 L1080 403 L1092 397 L1104 393 L1121 390 L1128 390 L1137 402 L1138 420 M1117 0 L1122 14 L1124 30 L1125 48 L1125 66 L1126 84 L1128 96 L1131 114 L1133 132 L1131 150 L1124 162 L1110 166 L1098 162 L1086 154 L1077 144 L1070 132 L1065 120 L1060 108 L1055 96 L1049 84 L1044 68 L1043 54 L1044 42 L1050 28 L1056 17 L1066 6 M1925 420 L1926 402 L1926 385 L1926 373 L1926 360 L1925 342 L1925 324 L1926 312 L1930 294 L1938 283 L1950 281 L1962 285 L1973 294 L1980 301 L1991 312 L1998 320 L2007 330 L2016 339 L2025 348 L2034 356 L2045 366 L2054 372 L2067 378 L2082 378 L2093 372 L2100 364 L2106 352 L2112 337 L2118 324 L2124 314 L2130 305 L2141 294 L2148 287 L2160 276 L2166 269 L2172 258 L2175 240 L2175 222 L2172 208 L2169 192 L2166 179 L2163 162 L2160 146 L2158 132 L2154 114 L2150 102 L2144 90 L2136 80 L2125 72 L2112 66 L2100 61 L2088 57 L2075 54 L2058 50 L2040 49 L2022 50 L2004 53 L1992 55 L1974 57 L1956 55 L1944 51 L1935 42 L1929 30 L1926 14 L1925 0 M2231 0 L2226 13 L2220 24 L2212 36 L2206 48 L2203 66 L2204 84 L2208 97 L2214 113 L2219 126 L2223 138 L2227 150 L2232 165 L2237 180 L2241 192 L2247 204 L2253 216 L2260 228 L2267 240 L2274 252 L2279 264 L2283 276 L2285 294 L2280 308 L2269 318 L2258 324 L2247 330 L2238 336 L2229 348 L2226 364 L2226 372 L2230 390 L2232 402 L2233 420 M3456 146 L3445 156 L3438 162 L3426 171 L3414 178 L3402 182 L3384 182 L3372 179 L3360 174 L3348 167 L3336 159 L3324 152 L3312 147 L3294 145 L3276 146 L3258 145 L3246 143 L3234 136 L3227 126 L3228 113 L3235 102 L3246 93 L3258 88 L3276 86 L3294 87 L3312 88 L3330 86 L3342 81 L3354 73 L3362 66 L3372 55 L3378 46 L3384 34 L3390 18 L3395 6 L3408 4 L3417 12 L3426 19 L3438 28 L3450 36 M0 44 L12 52 L21 60 L29 72 L33 84 L30 101 L24 112 L18 120 L8 132 L0 140 M624 229 L606 231 L594 227 L582 222 L570 216 L558 209 L546 202 L534 194 L523 186 L516 179 L508 168 L502 156 L498 138 L498 126 L499 114 L504 100 L510 90 L522 80 L534 76 L552 75 L570 78 L582 81 L594 85 L606 90 L618 98 L628 108 L636 120 L639 132 L640 150 L639 168 L638 186 L637 204 L635 216 L626 228 M2568 211 L2550 212 L2538 208 L2526 200 L2517 192 L2508 183 L2501 174 L2492 162 L2486 150 L2482 138 L2484 120 L2490 109 L2498 102 L2509 96 L2526 90 L2538 87 L2554 84 L2563 84 L2580 89 L2592 96 L2599 102 L2610 114 L2616 123 L2622 133 L2628 149 L2630 162 L2627 174 L2619 186 L2610 193 L2598 200 L2586 205 L2572 210 M1518 306 L1506 306 L1489 300 L1480 294 L1470 283 L1464 275 L1458 264 L1452 249 L1449 234 L1449 216 L1454 204 L1462 192 L1470 183 L1480 174 L1489 168 L1501 162 L1518 158 L1535 162 L1544 168 L1554 180 L1560 190 L1566 202 L1571 216 L1575 228 L1578 240 L1580 258 L1578 276 L1572 288 L1565 294 L1553 300 L1536 304 L1523 306 M882 199 L864 200 L856 192 L858 176 L866 168 L882 162 L892 174 L888 192 L882 199 M2970 331 L2952 332 L2934 333 L2916 332 L2898 330 L2886 327 L2874 322 L2862 315 L2850 306 L2844 300 L2834 288 L2827 276 L2825 264 L2828 252 L2838 244 L2850 239 L2868 237 L2886 236 L2904 234 L2916 232 L2928 228 L2940 222 L2952 215 L2964 206 L2974 198 L2982 190 L2994 180 L3006 190 L3012 201 L3018 213 L3024 228 L3027 240 L3030 252 L3033 270 L3032 288 L3028 300 L3020 312 L3012 319 L3000 324 L2982 329 L2970 331 M3324 297 L3306 294 L3299 288 L3289 276 L3282 264 L3278 252 L3277 234 L3282 218 L3294 210 L3306 210 L3318 215 L3327 222 L3334 234 L3337 246 L3338 264 L3336 278 L3330 292 M1764 271 L1746 275 L1734 270 L1728 258 L1728 240 L1734 229 L1746 222 L1758 222 L1770 224 L1782 230 L1792 240 L1788 254 L1777 264 L1766 270 M156 355 L138 359 L120 358 L102 356 L84 354 L72 352 L59 348 L44 342 L35 336 L24 326 L18 318 L12 300 L12 292 L18 276 L24 270 L36 263 L49 258 L66 254 L78 252 L96 251 L109 252 L126 258 L135 264 L144 272 L153 282 L161 294 L167 306 L170 318 L170 336 L165 348 L156 355 M1626 420 L1614 410 L1608 399 L1604 384 L1602 366 L1605 348 L1611 336 L1620 329 L1638 325 L1656 325 L1674 326 L1692 327 L1707 330 L1718 336 L1728 348 L1734 359 L1740 372 L1744 384 L1746 396 L1746 410 L1739 420 M2556 408 L2538 408 L2531 402 L2526 389 L2526 372 L2527 360 L2532 345 L2544 339 L2555 348 L2562 358 L2568 372 L2569 384 L2566 396 L2556 408 M2158 0 L2155 18 L2149 30 L2141 36 L2124 40 L2106 38 L2094 36 L2076 31 L2064 30 L2052 30 L2034 32 L2017 36 L2004 38 L1986 41 L1968 40 L1956 36 L1945 24 L1940 12 L1937 0 M1104 116 L1091 114 L1082 102 L1075 90 L1068 78 L1063 66 L1061 54 L1062 42 L1068 28 L1078 18 L1092 14 L1104 22 L1109 36 L1110 48 L1110 66 L1110 78 L1109 96 L1105 114 M3456 126 L3444 137 L3434 144 L3422 150 L3408 153 L3390 151 L3379 144 L3372 137 L3366 126 L3366 109 L3372 97 L3378 89 L3387 78 L3396 68 L3406 60 L3420 54 L3428 54 L3444 57 L3456 63 M0 66 L11 78 L14 90 L12 102 L5 114 M600 199 L582 198 L570 194 L558 189 L546 182 L536 174 L528 166 L521 156 L516 142 L515 126 L518 114 L525 102 L534 95 L547 90 L564 89 L576 91 L591 96 L602 102 L612 111 L619 120 L623 138 L622 156 L618 172 L613 186 L606 195 M2562 187 L2544 186 L2532 181 L2522 174 L2514 166 L2506 156 L2502 144 L2502 130 L2508 120 L2520 112 L2532 107 L2550 104 L2568 106 L2580 111 L2590 120 L2598 132 L2601 144 L2598 162 L2592 171 L2581 180 L2568 185 M1518 288 L1506 287 L1493 282 L1482 273 L1475 264 L1470 252 L1467 234 L1470 216 L1476 205 L1482 197 L1494 187 L1506 182 L1524 182 L1536 188 L1545 198 L1553 210 L1558 222 L1561 234 L1562 252 L1559 264 L1550 276 L1541 282 L1524 287 M2976 318 L2958 321 L2940 322 L2922 321 L2904 320 L2892 317 L2880 312 L2868 304 L2856 294 L2850 286 L2845 270 L2851 258 L2864 252 L2880 249 L2898 247 L2910 246 L2928 241 L2940 237 L2952 233 L2965 228 L2982 225 L2995 228 L3006 237 L3012 246 L3018 264 L3019 276 L3017 288 L3011 300 L3000 309 L2988 315 L2976 318 M132 342 L114 343 L102 341 L84 338 L72 334 L60 329 L48 320 L42 312 L38 294 L45 282 L54 276 L69 270 L84 267 L102 267 L114 270 L126 276 L138 286 L145 294 L151 306 L154 324 L147 336 L134 342 M1937 420 L1936 402 L1937 384 L1937 366 L1938 354 L1942 336 L1948 324 L1962 318 L1975 324 L1986 333 L1996 342 L2004 350 L2014 360 L2022 369 L2030 378 L2040 390 L2046 396 L2058 408 L2068 414 L2082 418 L2100 417 L2113 414 L2130 409 L2142 407 L2154 412 M1704 396 L1686 397 L1668 396 L1656 394 L1644 388 L1636 378 L1638 363 L1650 356 L1668 354 L1686 357 L1698 361 L1710 371 L1715 384 L1704 396 M2028 0 L2022 10 L2010 18 L1998 22 L1980 23 L1965 18 L1956 8 M3432 114 L3415 114 L3414 102 L3420 94 L3432 89 L3443 96 L3438 109 M582 170 L564 168 L552 162 L546 156 L538 144 L536 126 L542 114 L552 107 L570 105 L582 108 L594 116 L601 126 L603 144 L599 156 L588 167 M2556 152 L2538 150 L2537 138 L2550 134 L2560 144 M1518 265 L1506 263 L1494 253 L1490 240 L1493 222 L1500 213 L1512 207 L1525 210 L1536 221 L1540 234 L1538 252 L1530 261 L1518 265 M2964 307 L2946 308 L2928 308 L2910 306 L2898 302 L2886 296 L2877 288 L2874 276 L2880 269 L2895 264 L2910 261 L2924 258 L2940 254 L2952 250 L2970 246 L2988 250 L2996 258 L3001 270 L3000 282 L2993 294 L2982 302 L2968 306 M120 313 L102 317 L89 312 L82 300 L90 293 L107 294 L117 300 L121 312 M1951 420 L1950 408 L1950 390 L1951 378 L1956 362 L1964 354 L1976 354 L1988 360 L1998 369 L2007 378 L2016 390 L2022 400 L2028 414" fill="none" stroke="#ffffff" stroke-opacity="0.15" stroke-width="2"/></svg>
<div class="r" style="left:0px;top:0px;width:3456px;height:176px;background:#fff;"></div>
<div class="r" style="left:0px;top:0px;width:3456px;height:2px;background:#c9c9c9;"></div>
<div class="r" style="left:0px;top:176px;width:3456px;height:6px;background:#ab00a3;"></div>
<div class="r" style="left:32px;top:12px;width:80px;height:80px;background:#4f46e5;border-radius:12px;"></div>
<div class="t" style="top:38.64px;font:700 27px/34px 'Liberation Sans', sans-serif;color:#fff;letter-spacing:0.5px;left:-928.50px;width:2000px;text-align:center;">DQS</div>
<div class="r" style="left:1254px;top:20px;width:798px;height:63px;border:2px solid #747474;border-radius:8px;background:#fff;"></div>
<svg class="r" style="left:1287px;top:41px;" width="30" height="30" viewBox="0 0 30 30"><circle cx="12" cy="12" r="8.6" fill="none" stroke="#747474" stroke-width="3.3"/><line x1="18.2" y1="18.2" x2="26" y2="26" stroke="#747474" stroke-width="3.6" stroke-linecap="square"/></svg>
<div class="t" style="top:36.24px;font:400 27px/34px 'Liberation Sans', sans-serif;color:#747474;-webkit-text-stroke:0.3px;left:1331.00px;transform:scaleX(0.9943);transform-origin:left;">Search...</div>
<div class="r" style="left:2882px;top:28px;width:94px;height:48px;border:2px solid #939393;border-radius:8px;"></div>
<div class="r" style="left:2928px;top:28px;width:2px;height:48px;background:#939393;"></div>
<svg class="r" style="left:2890px;top:36px;" width="32" height="32" viewBox="0 0 32 32"><path d="M16 2 L20.2 11.6 L30.5 12.4 L22.6 19.1 L25 29.3 L16 23.8 L7 29.3 L9.4 19.1 L1.5 12.4 L11.8 11.6 Z" fill="#939393"/></svg>
<svg class="r" style="left:2943px;top:48px;" width="18" height="12" viewBox="0 0 18 12"><path d="M0.5 0.5 L17.5 0.5 L9 11 Z" fill="#939393"/></svg>
<div class="r" style="left:3008px;top:31px;width:40px;height:40px;background:#939393;border-radius:7px;"></div>
<svg class="r" style="left:3008px;top:31px;" width="40" height="40" viewBox="0 0 40 40"><path d="M20 8 V32 M8 20 H32" stroke="#fff" stroke-width="4" stroke-linecap="round"/></svg>
<svg class="r" style="left:3070px;top:28px;" width="52" height="48" viewBox="0 0 52 48"><path d="M7.9 28.7 C9 18 16 8.5 26 5.6 C36 8.5 43 18 43.9 28.7 Z" fill="#939393"/><path d="M11.5 29.5 L23 14.6 L28.4 21.4 L31.8 17.4 L40.5 29.5" fill="none" stroke="#fff" stroke-width="3.8" stroke-linejoin="miter"/><path d="M7.4 32 L44.3 32 L44.3 36.5 C38 40.5 32 42 26 42 C20 42 13 40.5 7.4 36.5 Z" fill="#939393"/><path d="M23.4 31 C22.4 35 27.6 36.5 27.2 43" fill="none" stroke="#fff" stroke-width="2.8"/></svg>
<svg class="r" style="left:3154px;top:33px;" width="28" height="38" viewBox="0 0 28 38"><path d="M3.5 12.5 C3.5 5.5 8.5 2.5 14 2.5 C19.5 2.5 24.5 5.5 24.5 11.5 C24.5 18.5 14.5 18.5 14.5 26" fill="none" stroke="#939393" stroke-width="6"/><rect x="10.5" y="30.5" width="8" height="7" rx="1.5" fill="#939393"/></svg>
<svg class="r" style="left:3213px;top:35px;" width="38" height="38" viewBox="0 0 38 38"><g transform="translate(19 19)" fill="#939393"><circle r="13"/><rect x="-4" y="-19" width="8" height="9" rx="2" transform="rotate(0)"/><rect x="-4" y="-19" width="8" height="9" rx="2" transform="rotate(60)"/><rect x="-4" y="-19" width="8" height="9" rx="2" transform="rotate(120)"/><rect x="-4" y="-19" width="8" height="9" rx="2" transform="rotate(180)"/><rect x="-4" y="-19" width="8" height="9" rx="2" transform="rotate(240)"/><rect x="-4" y="-19" width="8" height="9" rx="2" transform="rotate(300)"/></g><circle cx="19" cy="19" r="8" fill="#fff"/><path d="M21 12 L15 20 L19 20 L17 26 L23 18 L19 18 Z" fill="#939393"/></svg>
<svg class="r" style="left:3277px;top:33px;" width="38" height="38" viewBox="0 0 38 38"><path d="M19 0.5 C27 0.5 29.5 7 29.5 13 L29.5 21 C29.5 23.5 30.5 24.5 32.5 25.5 L35.5 26.5 C37 27.2 37 30 35.5 30 L2.5 30 C1 30 1 27.2 2.5 26.5 L5.5 25.5 C7.5 24.5 8.5 23.5 8.5 21 L8.5 13 C8.5 7 11 0.5 19 0.5 Z" fill="#939393"/><path d="M14.5 32.5 H23.5 C23.5 37 14.5 37 14.5 32.5 Z" fill="#939393"/></svg>
<svg class="r" style="left:3350px;top:18px;" width="68" height="68" viewBox="0 0 68 68"><defs><clipPath id="av"><circle cx="34" cy="34" r="33"/></clipPath><filter id="avb" x="-10%" y="-10%" width="120%" height="120%"><feGaussianBlur stdDeviation="0.7"/></filter></defs><g clip-path="url(#av)"><g filter="url(#avb)"><rect width="68" height="68" fill="#e6e8ea"/><path d="M30 30 C38 20 44 14 50 11 C57 13 63 21 70 30 L70 44 L30 44 Z" fill="#727980"/><path d="M33 33 C40 30 50 34 56 31 C62 33 66 36 70 34 L70 54 L33 54 Z" fill="#4f5953"/><path d="M36 54 L70 50 L70 70 L36 70 Z" fill="#eceff0"/><rect x="38" y="26" width="2.2" height="28" fill="#3a3e3b"/><ellipse cx="27.5" cy="27.5" rx="11" ry="14.5" fill="#c49c88"/><path d="M16.5 30 C17 40 22 44 27.5 44 C33 44 38 40 38.5 30 C35 35 31 37 27.5 37 C24 37 20 35 16.5 30 Z" fill="#9c7a6a"/><path d="M16 25 C15 13 21 9.5 28 9.5 C35 9.5 40 13 39 25 C37 18 33 16 28 16 C22 16 18 18 16 25 Z" fill="#39312d"/><path d="M9 50 L22 44 L35 46 L47 53 L42 70 L5 70 Z" fill="#2d52b3"/><path d="M2 58 L15 48 L23 70 L4 70 Z" fill="#22283a"/><rect x="10" y="55" width="6" height="3" fill="#d9dde6" transform="rotate(-20 13 56)"/></g></g><circle cx="34" cy="34" r="33" fill="none" stroke="#8c8c8c" stroke-width="2"/></svg>
<div class="r" style="left:59px;top:118px;width:10px;height:10px;background:#747474;border-radius:50%;"></div>
<div class="r" style="left:75px;top:118px;width:10px;height:10px;background:#747474;border-radius:50%;"></div>
<div class="r" style="left:91px;top:118px;width:10px;height:10px;background:#747474;border-radius:50%;"></div>
<div class="r" style="left:59px;top:134px;width:10px;height:10px;background:#747474;border-radius:50%;"></div>
<div class="r" style="left:75px;top:134px;width:10px;height:10px;background:#747474;border-radius:50%;"></div>
<div class="r" style="left:91px;top:134px;width:10px;height:10px;background:#747474;border-radius:50%;"></div>
<div class="r" style="left:59px;top:150px;width:10px;height:10px;background:#747474;border-radius:50%;"></div>
<div class="r" style="left:75px;top:150px;width:10px;height:10px;background:#747474;border-radius:50%;"></div>
<div class="r" style="left:91px;top:150px;width:10px;height:10px;background:#747474;border-radius:50%;"></div>
<div class="t" style="top:115.17px;font:400 37px/47px 'Liberation Sans', sans-serif;color:#222222;-webkit-text-stroke:0.3px;left:136.00px;transform:scaleX(0.9557);transform-origin:left;">Data Quality Sense</div>
<div class="r" style="left:740px;top:102px;width:217px;height:74px;background:#f9e7f6;border-top:6px solid #ab00a3;"></div>
<div class="t" style="top:122.14px;font:400 27px/34px 'Liberation Sans', sans-serif;color:#181818;letter-spacing:0.36666666666667425px;-webkit-text-stroke:0.3px;left:511.80px;">Home</div>
<div class="t" style="top:122.14px;font:400 27px/34px 'Liberation Sans', sans-serif;color:#181818;letter-spacing:0.3333333333333333px;-webkit-text-stroke:0.3px;left:631.00px;">Builder</div>
<div class="t" style="top:122.14px;font:400 27px/34px 'Liberation Sans', sans-serif;color:#181818;letter-spacing:0.2615384615384598px;-webkit-text-stroke:0.3px;left:764.20px;">Insight Studio</div>
<div class="t" style="top:122.14px;font:400 27px/34px 'Liberation Sans', sans-serif;color:#181818;letter-spacing:0.20833333333333334px;-webkit-text-stroke:0.3px;left:979.00px;">Error Monitor</div>
<div class="r" style="left:24px;top:206px;width:3408px;height:132px;background:#f3f3f3;border:2px solid #c9c9c9;border-radius:8px;box-shadow:0 2px 3px rgba(0,0,0,.12);"></div>
<div class="r" style="left:58px;top:240px;width:64px;height:64px;background:#5c8bd6;"></div>
<svg class="r" style="left:58px;top:240px;" width="64" height="64" viewBox="0 0 64 64"><circle cx="32" cy="32" r="16.5" fill="none" stroke="#fff" stroke-width="5.5"/><path d="M41 23 L35 35 L23 41 L29 29 Z" fill="#fff"/><circle cx="32" cy="32" r="2.5" fill="#5c8bd6"/></svg>
<div class="t" style="top:242.94px;font:400 41.7px/53px 'Liberation Sans', sans-serif;color:#181818;-webkit-text-stroke:0.3px;left:145.60px;transform:scaleX(0.9375);transform-origin:left;">Insight Studio</div>
<div class="r" style="left:24px;top:362px;width:3408px;height:1608px;background:#fff;"></div>
<div class="r" style="left:582px;top:362px;width:2px;height:1608px;background:#e5e5e5;"></div>
<div class="r" style="left:2832px;top:362px;width:2px;height:1608px;background:#e5e5e5;"></div>
<div class="t" style="top:388.40px;font:700 30px/38px 'Liberation Sans', sans-serif;color:#181818;left:55.60px;transform:scaleX(0.9461);transform-origin:left;">Definitions</div>
<div class="r" style="left:24px;top:452px;width:558px;height:2px;background:#e5e5e5;"></div>
<div class="r" style="left:56px;top:470px;width:494px;height:71px;border:2px solid #747474;border-radius:8px;"></div>
<svg class="r" style="left:78px;top:494px;" width="26" height="26" viewBox="0 0 26 26"><circle cx="10" cy="10" r="7.2" fill="none" stroke="#181818" stroke-width="2.6"/><line x1="15.5" y1="15.5" x2="22.5" y2="22.5" stroke="#181818" stroke-width="2.6" stroke-linecap="round"/></svg>
<div class="t" style="top:489.44px;font:400 27px/34px 'Liberation Sans', sans-serif;color:#222222;letter-spacing:0.07999999999999971px;-webkit-text-stroke:0.3px;left:120.20px;">Search definitions...</div>
<div class="r" style="left:24px;top:557px;width:558px;height:2px;background:#e5e5e5;"></div>
<svg class="r" style="left:50px;top:594px;" width="20" height="13" viewBox="0 0 20 13"><path d="M2 2 L10 10 L18 2" fill="none" stroke="#262626" stroke-width="3" stroke-linecap="round" stroke-linejoin="round"/></svg>
<svg class="r" style="left:83px;top:587px;" width="22" height="26" viewBox="0 0 22 26"><ellipse cx="11" cy="4.3" rx="10.6" ry="4.2" fill="#707070"/><path d="M0.4 8.90 C3 12.37 19 12.37 21.6 8.90 L21.6 12.10 C19 15.57 3 15.57 0.4 12.10 Z" fill="#707070"/><path d="M0.4 14.30 C3 17.77 19 17.77 21.6 14.30 L21.6 17.50 C19 20.97 3 20.97 0.4 17.50 Z" fill="#707070"/><path d="M0.4 19.70 C3 23.17 19 23.17 21.6 19.70 L21.6 22.90 C19 26.37 3 26.37 0.4 22.90 Z" fill="#707070"/></svg>
<div class="t" style="top:584.83px;font:700 23px/29px 'Liberation Sans', sans-serif;color:#0b5cab;letter-spacing:1.0px;left:119.80px;transform:scaleX(0.9138);transform-origin:left;">CASE</div>
<div class="t" style="top:584.83px;font:400 23px/29px 'Liberation Sans', sans-serif;color:#181818;-webkit-text-stroke:0.3px;right:2907.20px;text-align:right;transform:scaleX(0.9741);transform-origin:right;">(2)</div>
<div class="t" style="top:644.63px;font:400 25px/32px 'Liberation Sans', sans-serif;color:#181818;-webkit-text-stroke:0.3px;left:104.20px;transform:scaleX(0.9789);transform-origin:left;">Case Escalation Readin...</div>
<svg class="r" style="left:404.5px;top:650px;" width="23" height="23" viewBox="0 0 23 23"><circle cx="11.5" cy="11.5" r="10" fill="none" stroke="#6366f1" stroke-width="2.3"/><path d="M11.5 5.5 V11.5 L15.5 14.5" fill="none" stroke="#6366f1" stroke-width="2.3"/></svg>
<div class="r" style="left:440px;top:649px;width:26px;height:25px;background:#fdf0f0;border-radius:5px;"></div>
<div class="t" style="top:650.18px;font:700 16.5px/21px 'Liberation Sans', sans-serif;color:#a8192e;left:-547.25px;width:2000px;text-align:center;transform:scaleX(0.9000);transform-origin:center;">F</div>
<div class="r" style="left:478px;top:649px;width:72px;height:25px;background:#f1f2fd;border-radius:6px;"></div>
<div class="t" style="top:649.90px;font:700 17.3px/22px 'Liberation Sans', sans-serif;color:#5a5ed6;letter-spacing:0.8px;left:-485.70px;width:2000px;text-align:center;transform:scaleX(0.8839);transform-origin:center;">READY</div>
<div class="r" style="left:24px;top:691px;width:558px;height:60px;background:#f2f2fd;border-radius:0 7px 7px 0;"></div>
<div class="r" style="left:24px;top:691px;width:6px;height:60px;background:#6366f1;"></div>
<div class="t" style="top:705.88px;font:400 24px/30px 'Liberation Sans', sans-serif;color:#181818;letter-spacing:0.6047619047619042px;left:110.40px;-webkit-text-stroke:0.35px #181818;">Case SLA Compliance...</div>
<svg class="r" style="left:402.5px;top:710px;" width="23" height="23" viewBox="0 0 23 23"><circle cx="11.5" cy="11.5" r="10" fill="none" stroke="#6366f1" stroke-width="2.3"/><path d="M11.5 5.5 V11.5 L15.5 14.5" fill="none" stroke="#6366f1" stroke-width="2.3"/></svg>
<div class="r" style="left:438px;top:709px;width:28px;height:25px;background:#e9efec;border-radius:5px;"></div>
<div class="t" style="top:710.98px;font:700 16.5px/21px 'Liberation Sans', sans-serif;color:#2e7d45;left:-549.50px;width:2000px;text-align:center;transform:scaleX(0.8909);transform-origin:center;">B</div>
<div class="r" style="left:478px;top:709px;width:72px;height:25px;background:#e9eafa;border-radius:6px;"></div>
<div class="t" style="top:710.20px;font:700 17.3px/22px 'Liberation Sans', sans-serif;color:#5a5ed6;letter-spacing:0.8px;left:-485.70px;width:2000px;text-align:center;transform:scaleX(0.8839);transform-origin:center;">READY</div>
<svg class="r" style="left:54px;top:774.2px;" width="13" height="20" viewBox="0 0 13 20"><path d="M2 2 L10 10 L2 18" fill="none" stroke="#262626" stroke-width="3" stroke-linecap="round" stroke-linejoin="round"/></svg>
<svg class="r" style="left:83px;top:770.7px;" width="22" height="26" viewBox="0 0 22 26"><ellipse cx="11" cy="4.3" rx="10.6" ry="4.2" fill="#707070"/><path d="M0.4 8.90 C3 12.37 19 12.37 21.6 8.90 L21.6 12.10 C19 15.57 3 15.57 0.4 12.10 Z" fill="#707070"/><path d="M0.4 14.30 C3 17.77 19 17.77 21.6 14.30 L21.6 17.50 C19 20.97 3 20.97 0.4 17.50 Z" fill="#707070"/><path d="M0.4 19.70 C3 23.17 19 23.17 21.6 19.70 L21.6 22.90 C19 26.37 3 26.37 0.4 22.90 Z" fill="#707070"/></svg>
<div class="t" style="top:768.73px;font:700 23px/29px 'Liberation Sans', sans-serif;color:#434d5c;letter-spacing:1.0px;left:119.80px;transform:scaleX(0.9466);transform-origin:left;">CONTACT</div>
<div class="t" style="top:768.73px;font:400 23px/29px 'Liberation Sans', sans-serif;color:#181818;-webkit-text-stroke:0.3px;right:2907.20px;text-align:right;transform:scaleX(0.9741);transform-origin:right;">(2)</div>
<svg class="r" style="left:54px;top:838.2px;" width="13" height="20" viewBox="0 0 13 20"><path d="M2 2 L10 10 L2 18" fill="none" stroke="#262626" stroke-width="3" stroke-linecap="round" stroke-linejoin="round"/></svg>
<svg class="r" style="left:83px;top:834.7px;" width="22" height="26" viewBox="0 0 22 26"><ellipse cx="11" cy="4.3" rx="10.6" ry="4.2" fill="#707070"/><path d="M0.4 8.90 C3 12.37 19 12.37 21.6 8.90 L21.6 12.10 C19 15.57 3 15.57 0.4 12.10 Z" fill="#707070"/><path d="M0.4 14.30 C3 17.77 19 17.77 21.6 14.30 L21.6 17.50 C19 20.97 3 20.97 0.4 17.50 Z" fill="#707070"/><path d="M0.4 19.70 C3 23.17 19 23.17 21.6 19.70 L21.6 22.90 C19 26.37 3 26.37 0.4 22.90 Z" fill="#707070"/></svg>
<div class="t" style="top:832.73px;font:700 23px/29px 'Liberation Sans', sans-serif;color:#434d5c;letter-spacing:1.0px;left:119.80px;transform:scaleX(0.9172);transform-origin:left;">LEAD</div>
<div class="t" style="top:832.73px;font:400 23px/29px 'Liberation Sans', sans-serif;color:#181818;-webkit-text-stroke:0.3px;right:2907.20px;text-align:right;transform:scaleX(0.8519);transform-origin:right;">(1)</div>
<svg class="r" style="left:54px;top:902.2px;" width="13" height="20" viewBox="0 0 13 20"><path d="M2 2 L10 10 L2 18" fill="none" stroke="#262626" stroke-width="3" stroke-linecap="round" stroke-linejoin="round"/></svg>
<svg class="r" style="left:83px;top:898.7px;" width="22" height="26" viewBox="0 0 22 26"><ellipse cx="11" cy="4.3" rx="10.6" ry="4.2" fill="#707070"/><path d="M0.4 8.90 C3 12.37 19 12.37 21.6 8.90 L21.6 12.10 C19 15.57 3 15.57 0.4 12.10 Z" fill="#707070"/><path d="M0.4 14.30 C3 17.77 19 17.77 21.6 14.30 L21.6 17.50 C19 20.97 3 20.97 0.4 17.50 Z" fill="#707070"/><path d="M0.4 19.70 C3 23.17 19 23.17 21.6 19.70 L21.6 22.90 C19 26.37 3 26.37 0.4 22.90 Z" fill="#707070"/></svg>
<div class="t" style="top:896.73px;font:700 23px/29px 'Liberation Sans', sans-serif;color:#434d5c;letter-spacing:1.0px;left:119.80px;transform:scaleX(0.9554);transform-origin:left;">OPPORTUNITY</div>
<div class="t" style="top:896.73px;font:400 23px/29px 'Liberation Sans', sans-serif;color:#181818;-webkit-text-stroke:0.3px;right:2907.20px;text-align:right;transform:scaleX(0.8519);transform-origin:right;">(1)</div>
<div class="t" style="top:397.17px;font:400 20px/25px 'Liberation Sans', sans-serif;color:#465366;letter-spacing:0.8333333333333334px;-webkit-text-stroke:0.3px;left:624.20px;">Home</div>
<div class="t" style="top:397.17px;font:400 20px/25px 'Liberation Sans', sans-serif;color:#222222;-webkit-text-stroke:0.3px;left:696.00px;transform:scaleX(0.9000);transform-origin:left;">/</div>
<div class="t" style="top:397.17px;font:400 20px/25px 'Liberation Sans', sans-serif;color:#465366;letter-spacing:0.5666666666666819px;-webkit-text-stroke:0.3px;left:719.00px;">Case</div>
<div class="t" style="top:397.17px;font:400 20px/25px 'Liberation Sans', sans-serif;color:#222222;-webkit-text-stroke:0.3px;left:783.60px;transform:scaleX(1.0833);transform-origin:left;">/</div>
<div class="t" style="top:397.17px;font:400 20px/25px 'Liberation Sans', sans-serif;color:#222222;letter-spacing:0.7958333333333295px;left:806.40px;-webkit-text-stroke:0.5px;">Case SLA Compliance Check</div>
<div class="t" style="top:447.37px;font:400 20px/25px 'Liberation Sans', sans-serif;color:#262626;letter-spacing:1.5px;left:615.80px;transform:scaleX(0.9912);transform-origin:left;-webkit-text-stroke:0.6px;">DEFINITION</div>
<div class="t" style="top:442.65px;font:700 29px/37px 'Liberation Sans', sans-serif;color:#181818;left:758.00px;transform:scaleX(0.9626);transform-origin:left;">Case SLA Compliance Check</div>
<svg class="r" style="left:1160px;top:445px;" width="30" height="30" viewBox="0 0 30 30"><path d="M15.4 8.4 H9 C7.3 8.4 6 9.7 6 11.4 V21.7 C6 23.4 7.3 24.7 9 24.7 H19.3 C21 24.7 22.3 23.4 22.3 21.7 V15.6" fill="none" stroke="#262626" stroke-width="2.3" stroke-linecap="round"/><path d="M13.4 17.5 L26.5 4.5 M18.8 4 H27 V12" fill="none" stroke="#262626" stroke-width="2.3" stroke-linecap="round" stroke-linejoin="round"/></svg>
<div class="t" style="top:538.60px;font:400 22.2px/28px 'Liberation Sans', sans-serif;color:#465366;letter-spacing:0.7857142857142857px;-webkit-text-stroke:0.3px;left:647.00px;">Overview</div>
<div class="t" style="top:538.60px;font:400 22.2px/28px 'Liberation Sans', sans-serif;color:#465366;letter-spacing:0.6599999999999909px;-webkit-text-stroke:0.3px;left:810.00px;">Fields</div>
<div class="t" style="top:538.60px;font:400 22.2px/28px 'Liberation Sans', sans-serif;color:#465366;letter-spacing:0.5px;-webkit-text-stroke:0.3px;left:937.20px;">Scans</div>
<div class="t" style="top:538.60px;font:400 22.2px/28px 'Liberation Sans', sans-serif;color:#4338ca;letter-spacing:1.25px;-webkit-text-stroke:0.3px;left:1064.60px;">Exports</div>
<div class="r" style="left:616px;top:592px;width:2184px;height:4px;background:#e5e5e5;"></div>
<div class="r" style="left:1034px;top:591px;width:146px;height:6px;background:#4338ca;"></div>
<div class="t" style="top:678.87px;font:400 20px/25px 'Liberation Sans', sans-serif;color:#465366;letter-spacing:1.5px;left:615.80px;transform:scaleX(0.9747);transform-origin:left;-webkit-text-stroke:0.6px;">EXPORT HISTORY</div>
<div class="t" style="top:747.18px;font:400 21.1px/27px 'Liberation Sans', sans-serif;color:#2b2b2b;letter-spacing:1.2px;left:639.80px;transform:scaleX(0.9333);transform-origin:left;-webkit-text-stroke:0.6px;">FIELD</div>
<div class="t" style="top:747.18px;font:400 21.1px/27px 'Liberation Sans', sans-serif;color:#2b2b2b;letter-spacing:1.2px;left:1070.00px;transform:scaleX(0.9559);transform-origin:left;-webkit-text-stroke:0.6px;">DIMENSION</div>
<div class="t" style="top:747.18px;font:400 21.1px/27px 'Liberation Sans', sans-serif;color:#2b2b2b;letter-spacing:1.2px;left:1593.60px;transform:scaleX(0.9105);transform-origin:left;-webkit-text-stroke:0.6px;">DATE</div>
<div class="t" style="top:747.18px;font:400 21.1px/27px 'Liberation Sans', sans-serif;color:#2b2b2b;letter-spacing:1.2px;right:840.20px;text-align:right;transform:scaleX(0.9400);transform-origin:right;-webkit-text-stroke:0.6px;">SIZE</div>
<div class="t" style="top:747.18px;font:400 21.1px/27px 'Liberation Sans', sans-serif;color:#2b2b2b;letter-spacing:1.2px;left:2679.00px;transform:scaleX(0.9455);transform-origin:left;-webkit-text-stroke:0.6px;">ACTIONS</div>
<div class="r" style="left:616px;top:792px;width:2184px;height:2px;background:#e5e5e5;"></div>
<div class="t" style="top:827.41px;font:400 21.4px/27px 'Liberation Mono', monospace;color:#181818;-webkit-text-stroke:0.3px;left:640.00px;transform:scaleX(0.9338);transform-origin:left;">Description</div>
<div class="r" style="left:1071px;top:822px;width:171px;height:33px;background:#f0f1f3;border-radius:17px;"></div>
<div class="t" style="top:826.57px;font:400 20px/25px 'Liberation Sans', sans-serif;color:#3b4656;letter-spacing:1.0px;-webkit-text-stroke:0.3px;left:156.40px;width:2000px;text-align:center;">Completeness</div>
<div class="t" style="top:825.13px;font:400 22.4px/28px 'Liberation Sans', sans-serif;color:#181818;letter-spacing:0.6521739130434783px;-webkit-text-stroke:0.3px;left:1592.00px;">Mar 23, 2026 at 10:49 PM</div>
<div class="t" style="top:827.31px;font:400 21.4px/27px 'Liberation Mono', monospace;color:#181818;letter-spacing:0.5199999999999818px;-webkit-text-stroke:0.3px;right:839.00px;text-align:right;">3.2 KB</div>
<svg class="r" style="left:2670px;top:815px;" width="105" height="45" viewBox="0 0 105 45"><g fill="none" stroke="#262626" stroke-width="2.2" stroke-linecap="round" stroke-linejoin="round"><path d="M22 12 V27 M15.6 20.2 L22 26.6 L28.4 20.2 M11.5 26 V30.8 C11.5 32.5 12.8 33.3 14.5 33.3 H29.5 C31.2 33.3 32.5 32.5 32.5 30.8 V26"/><path d="M66.8 15.8 H89 M73.2 15.5 V14 C73.2 12 74.5 11.1 76.2 11.1 H80 C81.7 11.1 83 12 83 14 V15.5 M69.9 16 V31.5 C69.9 33.3 71.2 34.5 73 34.5 H83.2 C85 34.5 86.3 33.3 86.3 31.5 V16"/></g></svg>
<div class="r" style="left:616px;top:882px;width:2184px;height:2px;background:#e5e5e5;"></div>
<div class="t" style="top:935.57px;font:400 20px/25px 'Liberation Sans', sans-serif;color:#465366;letter-spacing:1.5px;left:615.20px;transform:scaleX(0.9691);transform-origin:left;-webkit-text-stroke:0.6px;">EXPORTABLE FIELDS</div>
<div class="t" style="top:1003.88px;font:400 21.1px/27px 'Liberation Sans', sans-serif;color:#2b2b2b;letter-spacing:1.2px;left:639.00px;transform:scaleX(0.9365);transform-origin:left;-webkit-text-stroke:0.6px;">FIELD</div>
<div class="t" style="top:1003.88px;font:400 21.1px/27px 'Liberation Sans', sans-serif;color:#2b2b2b;letter-spacing:1.2px;left:1257.80px;transform:scaleX(0.8881);transform-origin:left;-webkit-text-stroke:0.6px;">TYPE</div>
<div class="t" style="top:1003.88px;font:400 21.1px/27px 'Liberation Sans', sans-serif;color:#2b2b2b;letter-spacing:1.2px;left:918.15px;width:2000px;text-align:center;transform:scaleX(0.9285);transform-origin:center;-webkit-text-stroke:0.6px;">COMPLETENESS</div>
<div class="t" style="top:1003.88px;font:400 21.1px/27px 'Liberation Sans', sans-serif;color:#2b2b2b;letter-spacing:1.2px;left:1537.65px;width:2000px;text-align:center;transform:scaleX(0.9574);transform-origin:center;-webkit-text-stroke:0.6px;">VALIDITY</div>
<div class="r" style="left:616px;top:1048px;width:2184px;height:2px;background:#e5e5e5;"></div>
<div class="t" style="top:1070.24px;font:700 21.8px/28px 'Liberation Sans', sans-serif;color:#181818;letter-spacing:0.35px;left:640.00px;">Case Number</div>
<div class="t" style="top:1103.51px;font:400 21px/27px 'Liberation Mono', monospace;color:#2b2b2b;-webkit-text-stroke:0.3px;left:639.00px;transform:scaleX(0.9597);transform-origin:left;">CaseNumber</div>
<div class="r" style="left:1257px;top:1099px;width:18px;height:3px;background:#3a3a3a;"></div>
<div class="r" style="left:1860px;top:1078px;width:116px;height:42px;border:2px solid #3a31b5;border-radius:8px;"></div>
<div class="t" style="top:1085.89px;font:400 20.5px/26px 'Liberation Sans', sans-serif;color:#3a31b5;letter-spacing:1.0px;left:917.55px;width:2000px;text-align:center;transform:scaleX(0.9922);transform-origin:center;-webkit-text-stroke:0.55px #3a31b5;">Export</div>
<div class="r" style="left:2479px;top:1078px;width:116px;height:42px;border:2px solid #3a31b5;border-radius:8px;"></div>
<div class="t" style="top:1085.89px;font:400 20.5px/26px 'Liberation Sans', sans-serif;color:#3a31b5;letter-spacing:1.0px;left:1536.05px;width:2000px;text-align:center;transform:scaleX(0.9922);transform-origin:center;-webkit-text-stroke:0.55px #3a31b5;">Export</div>
<div class="r" style="left:616px;top:1146px;width:2184px;height:2px;background:#e5e5e5;"></div>
<div class="t" style="top:1168.24px;font:700 21.8px/28px 'Liberation Sans', sans-serif;color:#181818;letter-spacing:0.35px;left:640.00px;">Description</div>
<div class="t" style="top:1201.51px;font:400 21px/27px 'Liberation Mono', monospace;color:#2b2b2b;-webkit-text-stroke:0.3px;left:639.00px;transform:scaleX(0.9597);transform-origin:left;">Description</div>
<div class="r" style="left:1257px;top:1197px;width:18px;height:3px;background:#3a3a3a;"></div>
<div class="r" style="left:1860px;top:1176px;width:116px;height:42px;border:2px solid #3a31b5;border-radius:8px;"></div>
<div class="t" style="top:1183.89px;font:400 20.5px/26px 'Liberation Sans', sans-serif;color:#3a31b5;letter-spacing:1.0px;left:917.55px;width:2000px;text-align:center;transform:scaleX(0.9922);transform-origin:center;-webkit-text-stroke:0.55px #3a31b5;">Export</div>
<div class="r" style="left:2479px;top:1176px;width:116px;height:42px;border:2px solid #3a31b5;border-radius:8px;"></div>
<div class="t" style="top:1183.89px;font:400 20.5px/26px 'Liberation Sans', sans-serif;color:#3a31b5;letter-spacing:1.0px;left:1536.05px;width:2000px;text-align:center;transform:scaleX(0.9922);transform-origin:center;-webkit-text-stroke:0.55px #3a31b5;">Export</div>
<div class="r" style="left:616px;top:1244px;width:2184px;height:2px;background:#e5e5e5;"></div>
<div class="t" style="top:1266.24px;font:700 21.8px/28px 'Liberation Sans', sans-serif;color:#181818;letter-spacing:0.35px;left:640.00px;">Status</div>
<div class="t" style="top:1299.51px;font:400 21px/27px 'Liberation Mono', monospace;color:#2b2b2b;-webkit-text-stroke:0.3px;left:639.00px;transform:scaleX(0.9597);transform-origin:left;">Status</div>
<div class="r" style="left:1257px;top:1295px;width:18px;height:3px;background:#3a3a3a;"></div>
<div class="r" style="left:1860px;top:1274px;width:116px;height:42px;border:2px solid #3a31b5;border-radius:8px;"></div>
<div class="t" style="top:1281.89px;font:400 20.5px/26px 'Liberation Sans', sans-serif;color:#3a31b5;letter-spacing:1.0px;left:917.55px;width:2000px;text-align:center;transform:scaleX(0.9922);transform-origin:center;-webkit-text-stroke:0.55px #3a31b5;">Export</div>
<div class="r" style="left:2479px;top:1274px;width:116px;height:42px;border:2px solid #3a31b5;border-radius:8px;"></div>
<div class="t" style="top:1281.89px;font:400 20.5px/26px 'Liberation Sans', sans-serif;color:#3a31b5;letter-spacing:1.0px;left:1536.05px;width:2000px;text-align:center;transform:scaleX(0.9922);transform-origin:center;-webkit-text-stroke:0.55px #3a31b5;">Export</div>
<div class="r" style="left:616px;top:1342px;width:2184px;height:2px;background:#e5e5e5;"></div>
<div class="t" style="top:387.33px;font:400 23px/29px 'Liberation Sans', sans-serif;color:#181818;letter-spacing:0.2923076923076888px;left:2865.80px;-webkit-text-stroke:0.75px;">Case SLA Compliance Check ·</div>
<div class="t" style="top:422.81px;font:400 21px/27px 'Liberation Mono', monospace;color:#2b2b2b;-webkit-text-stroke:0.3px;left:2865.40px;transform:scaleX(0.9849);transform-origin:left;">85.0% B · 3 scans</div>
<div class="r" style="left:3345px;top:387px;width:55px;height:54px;border:2px solid #e5e5e5;border-radius:10px;"></div>
<svg class="r" style="left:3357px;top:398px;" width="30" height="30" viewBox="0 0 30 30"><path d="M4 13 C6 5 18 1 25 9 M26 17 C24 25 12 29 5 21" fill="none" stroke="#262626" stroke-width="2.3"/><path d="M26 3 V10 H19 M4 27 V20 H11" fill="none" stroke="#262626" stroke-width="2.3"/></svg>
<div class="r" style="left:2834px;top:474px;width:598px;height:2px;background:#e5e5e5;"></div>
<div class="r" style="left:2867px;top:501px;width:178px;height:70px;border:2px solid #c9c9c9;border-radius:12px;"></div>
<svg class="r" style="left:2895px;top:521px;" width="24" height="30" viewBox="0 0 24 30"><path d="M3 3 L21 15 L3 27 Z" fill="none" stroke="#181818" stroke-width="2.6" stroke-linejoin="round"/></svg>
<div class="t" style="top:524.87px;font:400 20px/25px 'Liberation Sans', sans-serif;color:#181818;letter-spacing:0.6857142857143117px;left:2927.40px;-webkit-text-stroke:0.65px;">Run Scan</div>
<div class="r" style="left:3328px;top:500px;width:72px;height:72px;border:2px solid #e5e5e5;border-radius:12px;"></div>
<svg class="r" style="left:3349px;top:521px;" width="30" height="30" viewBox="0 0 30 30"><circle cx="15" cy="15" r="12.2" fill="none" stroke="#262626" stroke-width="2.6"/><path d="M15 8.5 V15 L20 18.5" fill="none" stroke="#262626" stroke-width="2.6" stroke-linecap="round"/></svg>
<div class="t" style="top:579.07px;font:400 20px/25px 'Liberation Sans', sans-serif;color:#2b2b2b;letter-spacing:0.8409090909090909px;left:2132.45px;width:2000px;text-align:center;-webkit-text-stroke:0.45px;">Last scan: Mar 24, 2026</div>
<div class="r" style="left:2834px;top:630px;width:598px;height:2px;background:#e5e5e5;"></div>
<div class="t" style="top:658.84px;font:700 19.8px/25px 'Liberation Sans', sans-serif;color:#2b2b2b;letter-spacing:1.5999999999999848px;left:2865.80px;">ANALYZE</div>
<div class="t" style="top:723.04px;font:400 21.8px/28px 'Liberation Sans', sans-serif;color:#465366;letter-spacing:0.9166666666666666px;-webkit-text-stroke:0.3px;left:2882.00px;">Export Report</div>
<div class="r" style="left:2834px;top:793px;width:598px;height:2px;background:#e5e5e5;"></div>
<div class="t" style="top:822.94px;font:700 19.8px/25px 'Liberation Sans', sans-serif;color:#2b2b2b;letter-spacing:1.5px;left:2865.60px;transform:scaleX(0.9962);transform-origin:left;">CONFIGURE</div>
<div class="t" style="top:884.54px;font:400 21.8px/28px 'Liberation Sans', sans-serif;color:#465366;letter-spacing:0.8500000000000065px;-webkit-text-stroke:0.3px;left:2881.80px;">Manage Schedule</div>
<div class="t" style="top:885.29px;font:italic 400 20.5px/26px 'Liberation Sans', sans-serif;color:#2b2b2b;letter-spacing:0.6923076923076923px;right:72.00px;text-align:right;-webkit-text-stroke:0.15px;">Next in 8h 35m</div>
<div class="r" style="left:2834px;top:954px;width:598px;height:2px;background:#e5e5e5;"></div>
<div class="t" style="top:982.54px;font:700 19.8px/25px 'Liberation Sans', sans-serif;color:#2b2b2b;letter-spacing:1.6714285714285455px;left:2865.60px;">NAVIGATE</div>
<div class="t" style="top:1047.14px;font:400 21.8px/28px 'Liberation Sans', sans-serif;color:#465366;letter-spacing:0.8764705882352994px;-webkit-text-stroke:0.3px;left:2882.00px;">Open in Salesforce</div>
<div class="t" style="top:1119.14px;font:400 21.8px/28px 'Liberation Sans', sans-serif;color:#465366;letter-spacing:0.7363636363636281px;-webkit-text-stroke:0.3px;left:2883.00px;">View Records</div>
<svg class="r" style="left:3350px;top:700px;" width="50" height="460" viewBox="0 0 50 460"><g fill="none" stroke="#8a8d94" stroke-width="2.3" stroke-linecap="round" stroke-linejoin="round"><path d="M24.4 27.2 V43.2 M17.9 36.8 L24.4 43.3 L30.9 36.8"/><path d="M18.5 365.3 L30.8 353.2 M20.4 353.2 H31 V363"/><path d="M14.7 431.4 H30.8 M23.8 425 L31 431.4 L23.8 437.8"/></g></svg>
<div class="r" style="left:2834px;top:1190px;width:598px;height:2px;background:#e5e5e5;"></div>
<div class="r" style="left:2834px;top:1192px;width:598px;height:166px;background:#fdf6f1;"></div>
<div class="r" style="left:2834px;top:1192px;width:6px;height:166px;background:#7a4a00;"></div>
<div class="t" style="top:1218.84px;font:700 19.8px/25px 'Liberation Sans', sans-serif;color:#2b2b2b;letter-spacing:1.5625px;left:2872.80px;">QUICK FIX</div>
<div class="t" style="top:1264.09px;font:700 20.5px/26px 'Liberation Sans', sans-serif;color:#222222;letter-spacing:0.559999999999991px;left:2872.00px;">Description</div>
<div class="t" style="top:1264.09px;font:400 20.5px/26px 'Liberation Sans', sans-serif;color:#465366;letter-spacing:0.5099999999999909px;-webkit-text-stroke:0.3px;left:2996.80px;">at 9.6% — worst field</div>
<div class="t" style="top:1303.69px;font:400 20.5px/26px 'Liberation Sans', sans-serif;color:#3b82e0;letter-spacing:0.9136363636363595px;-webkit-text-stroke:0.3px;left:2871.00px;">Investigate Description</div>
<svg class="r" style="left:3104px;top:1309px;" width="20" height="18" viewBox="0 0 20 18"><path d="M2 9 H17 M10.5 2.5 L17 9 L10.5 15.5" fill="none" stroke="#3b82e0" stroke-width="2.2"/></svg>
<div class="r" style="left:2872px;top:1328px;width:252px;height:2px;background:#3b82e0;"></div>
</body></html>
